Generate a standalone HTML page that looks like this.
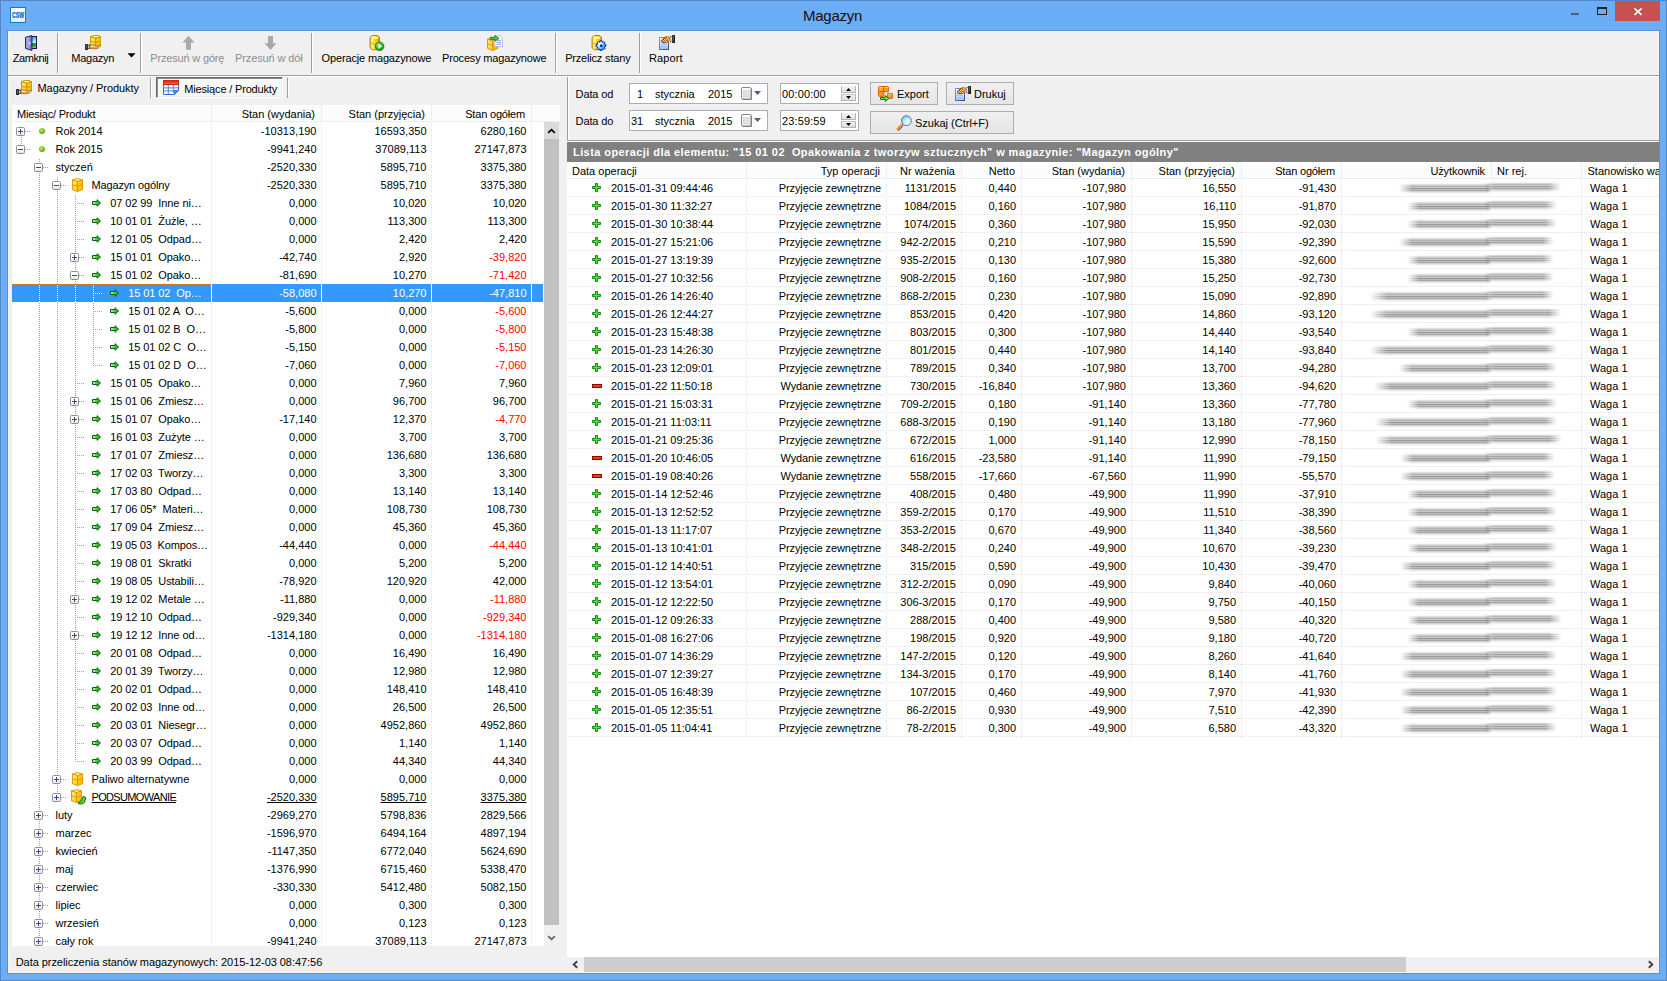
<!DOCTYPE html>
<html lang="pl"><head><meta charset="utf-8"><title>Magazyn</title>
<style>
html,body{margin:0;padding:0;}
body{width:1667px;height:981px;overflow:hidden;background:#6BADF6;position:relative;font-family:"Liberation Sans",sans-serif;font-size:11px;color:#000;}
div,svg{position:absolute;box-sizing:border-box;}
.t{white-space:pre;line-height:13px;height:13px;}
.c{text-align:center;}
.r{text-align:right;}
.g{color:#8d8d8d;}
.row{left:0;width:100%;height:18px;line-height:18px;white-space:pre;}
.row div{height:18px;line-height:18px;white-space:pre;top:0;}
.num{text-align:right;}
.red{color:#f00;}
.u{text-decoration:underline;}
.sep{width:2px;border-left:1px solid #a0a0a0;border-right:1px solid #fff;}
.btn{border:1px solid #acacac;background:linear-gradient(#f0f0f0,#e5e5e5);}
.edit{border:1px solid #abadb3;background:#fff;}
.hl{color:#fff;}
.bx{width:9px;height:9px;border:1px solid #8e8e8e;border-radius:1.5px;background:linear-gradient(#fff,#fff 45%,#e3e3e3);}
.bx i{position:absolute;background:#2f4a94;}
.fl{background:linear-gradient(90deg,transparent,#efefef 8%,#efefef 92%,transparent);}.s1{background:linear-gradient(rgba(85,85,85,0.05) 0.0%,rgba(85,85,85,0.05) 9.1%,rgba(85,85,85,0.18) 9.1%,rgba(85,85,85,0.18) 18.2%,rgba(85,85,85,0.32) 18.2%,rgba(85,85,85,0.32) 27.3%,rgba(85,85,85,0.46) 27.3%,rgba(85,85,85,0.46) 36.4%,rgba(85,85,85,0.32) 36.4%,rgba(85,85,85,0.32) 45.5%,rgba(85,85,85,0.6) 45.5%,rgba(85,85,85,0.6) 54.5%,rgba(85,85,85,0.4) 54.5%,rgba(85,85,85,0.4) 63.6%,rgba(85,85,85,0.5) 63.6%,rgba(85,85,85,0.5) 72.7%,rgba(85,85,85,0.28) 72.7%,rgba(85,85,85,0.28) 81.8%,rgba(85,85,85,0.12) 81.8%,rgba(85,85,85,0.12) 90.9%,rgba(85,85,85,0.04) 90.9%,rgba(85,85,85,0.04) 100.0%);-webkit-mask-image:linear-gradient(90deg,transparent,#000 14%,#000 95%,transparent);mask-image:linear-gradient(90deg,transparent,#000 14%,#000 95%,transparent);filter:blur(0.55px);}.s2{background:linear-gradient(rgba(85,85,85,0.06) 0.0%,rgba(85,85,85,0.06) 9.1%,rgba(85,85,85,0.24) 9.1%,rgba(85,85,85,0.24) 18.2%,rgba(85,85,85,0.42) 18.2%,rgba(85,85,85,0.42) 27.3%,rgba(85,85,85,0.3) 27.3%,rgba(85,85,85,0.3) 36.4%,rgba(85,85,85,0.54) 36.4%,rgba(85,85,85,0.54) 45.5%,rgba(85,85,85,0.36) 45.5%,rgba(85,85,85,0.36) 54.5%,rgba(85,85,85,0.52) 54.5%,rgba(85,85,85,0.52) 63.6%,rgba(85,85,85,0.32) 63.6%,rgba(85,85,85,0.32) 72.7%,rgba(85,85,85,0.18) 72.7%,rgba(85,85,85,0.18) 81.8%,rgba(85,85,85,0.08) 81.8%,rgba(85,85,85,0.08) 90.9%,rgba(85,85,85,0.03) 90.9%,rgba(85,85,85,0.03) 100.0%);-webkit-mask-image:linear-gradient(90deg,transparent,#000 12%,#000 84%,transparent);mask-image:linear-gradient(90deg,transparent,#000 12%,#000 84%,transparent);filter:blur(0.55px);}
</style></head><body>

<svg width="0" height="0" style="position:absolute"><defs>
<linearGradient id="gy" x1="0" y1="0" x2="0" y2="1"><stop offset="0" stop-color="#ffe96a"/><stop offset="1" stop-color="#f0a800"/></linearGradient>
<linearGradient id="gyl" x1="0" y1="0" x2="1" y2="1"><stop offset="0" stop-color="#fff27a"/><stop offset="1" stop-color="#ffcc00"/></linearGradient>
<linearGradient id="gyr" x1="0" y1="0" x2="1" y2="1"><stop offset="0" stop-color="#ffd21a"/><stop offset="1" stop-color="#ffb400"/></linearGradient>
<linearGradient id="gcyl" x1="0" y1="0" x2="1" y2="0"><stop offset="0" stop-color="#ffe23a"/><stop offset="0.25" stop-color="#fff27a"/><stop offset="0.6" stop-color="#ffd000"/><stop offset="1" stop-color="#e09c00"/></linearGradient>
<linearGradient id="gappbg" x1="0" y1="0" x2="0" y2="1"><stop offset="0" stop-color="#fff"/><stop offset="0.6" stop-color="#fbfbfb"/><stop offset="1" stop-color="#e6e6e6"/></linearGradient>
<linearGradient id="gdoor" x1="0" y1="0" x2="1" y2="0"><stop offset="0" stop-color="#9c98e4"/><stop offset="0.45" stop-color="#a8a4ee"/><stop offset="1" stop-color="#5c5aa0"/></linearGradient>
<linearGradient id="gsky" x1="0" y1="0" x2="0" y2="1"><stop offset="0" stop-color="#2ca4ff"/><stop offset="0.5" stop-color="#d4f6ff"/><stop offset="0.56" stop-color="#1a9a12"/><stop offset="0.75" stop-color="#22a818"/><stop offset="1" stop-color="#72fa40"/></linearGradient>
<linearGradient id="ghand" x1="0" y1="0" x2="0" y2="1"><stop offset="0" stop-color="#fffce4"/><stop offset="0.45" stop-color="#ffd87c"/><stop offset="1" stop-color="#d2600e"/></linearGradient>
<linearGradient id="gdoc" x1="0" y1="0" x2="0" y2="1"><stop offset="0" stop-color="#ffffff"/><stop offset="1" stop-color="#9fc2f6"/></linearGradient>
<linearGradient id="gdocs" x1="0" y1="0" x2="1" y2="1"><stop offset="0" stop-color="#6e9eec"/><stop offset="1" stop-color="#3c4690"/></linearGradient>
<linearGradient id="gred" x1="0" y1="0" x2="0" y2="1"><stop offset="0" stop-color="#d81c08"/><stop offset="1" stop-color="#ff6a3a"/></linearGradient>
<linearGradient id="gor" x1="0" y1="0" x2="1" y2="1"><stop offset="0" stop-color="#ffb45a"/><stop offset="1" stop-color="#f07c10"/></linearGradient>
<linearGradient id="garr2" x1="0" y1="0" x2="1" y2="0"><stop offset="0.1" stop-color="#aaf8a4"/><stop offset="0.6" stop-color="#3cc43a"/><stop offset="1" stop-color="#1c9a1c"/></linearGradient>
<linearGradient id="ggarr" x1="0" y1="0" x2="0" y2="1"><stop offset="0" stop-color="#7df06a"/><stop offset="1" stop-color="#1fae1a"/></linearGradient>
<radialGradient id="ggreen" cx="0.42" cy="0.35" r="0.7"><stop offset="0" stop-color="#c4ec6a"/><stop offset="0.55" stop-color="#86c623"/><stop offset="1" stop-color="#4f9a0c"/></radialGradient>
<radialGradient id="gplay" cx="0.4" cy="0.35" r="0.75"><stop offset="0" stop-color="#8cf070"/><stop offset="0.6" stop-color="#2fb822"/><stop offset="1" stop-color="#0f7a0c"/></radialGradient>
<radialGradient id="ggear" cx="0.3" cy="0.3" r="0.9"><stop offset="0" stop-color="#ffffff"/><stop offset="0.35" stop-color="#b8ecff"/><stop offset="0.75" stop-color="#38a4ff"/><stop offset="1" stop-color="#1c7cf0"/></radialGradient>
<radialGradient id="gglass" cx="0.66" cy="0.68" r="0.8"><stop offset="0" stop-color="#ffffff"/><stop offset="0.45" stop-color="#c6f2ff"/><stop offset="1" stop-color="#72b2f0"/></radialGradient>
<g id="ic-app"><rect x="0.5" y="0.5" width="15" height="15" fill="url(#gappbg)" stroke="#0a7ccc"/></g>
<g id="ic-dot"><circle cx="3" cy="3" r="3" fill="url(#ggreen)"/></g>
<g id="ic-box" stroke="#dd9200" stroke-width="0.9" stroke-linejoin="round"><path d="M0.5 1.9 L5.500 3.4 V13.500 L0.5 11.700 Z" fill="url(#gyl)"/><path d="M10.500 1.9 L5.500 3.4 V13.500 L10.500 11.700 Z" fill="url(#gyr)"/><path d="M5.500 0.5 L10.500 1.9 L5.500 3.4 L0.5 1.9 Z" fill="#fff38c"/><path d="M0.5 6.700 L5.500 8.300 L10.500 6.700" fill="none"/></g>
<g id="ic-box2"><use href="#ic-box"/><path d="M12.200 7.400 L14.400 8.200 L14.700 10.400 L13.600 11 L14 12.800 L11.800 14.800 L7.600 14.900 L7.300 13.600 L9.800 12.400 L10.400 10.200 Z" fill="#52d636" stroke="#0e6e0c" stroke-width="1" stroke-linejoin="round"/></g>
<g id="ic-arr"><path d="M0.500 2.500 H5.100 V0.700 L8.500 4 L5.100 7.300 V5.500 H0.500 Z" fill="url(#garr2)" stroke="#0a5c0c" stroke-width="1" stroke-linejoin="round"/></g>
<g id="ic-plus"><path d="M3.500 0.5 H5.500 V3.500 H8.500 V5.500 H5.500 V8.500 H3.500 V5.500 H0.5 V3.500 H3.500 Z" fill="#5fdc48" stroke="#138a10" stroke-width="1"/></g>
<g id="ic-minus"><rect x="0.5" y="0.5" width="9" height="3" fill="#f23a14" stroke="#8a0a04"/></g>
<g id="ic-up"><path d="M8.500 0.8 L14.500 7.600 H11 V14.800 H6 V7.600 H2.500 Z" fill="#a9a9a9"/></g>
<g id="ic-down"><path d="M8.500 15 L14.500 8.200 H11 V1 H6 V8.200 H2.500 Z" fill="#a9a9a9"/></g>
<g id="ic-door"><rect x="8.500" y="1.500" width="5" height="12" fill="url(#gsky)" stroke="#1a1652"/><path d="M2.500 2.300 L9 0.6 V15.400 L2.500 13.400 Z" fill="url(#gdoor)" stroke="#24246a" stroke-linejoin="round"/><rect x="6" y="7" width="1.200" height="2.200" fill="#eef"/></g>
<g id="ic-stack" stroke="#cc8c00" stroke-width="0.9" stroke-linejoin="round"><path d="M5.500 1.800 L10.700 3.200 V12.400 L5.500 11 Z" fill="url(#gyl)"/><path d="M15.700 1.800 L10.700 3.200 V12.400 L15.700 11 Z" fill="url(#gyr)"/><path d="M8.200 0.450 H13 L15.700 1.800 L10.700 3.200 L5.500 1.800 Z" fill="#fff680"/><path d="M5.500 6.300 L10.700 7.300 L15.700 6.300" fill="none"/></g>
<g id="ic-hand"><use href="#ic-stack"/><path d="M4.800 10.300 C6.500 9.400 8 9.600 9.600 10.400 C11 11.200 12.600 11.300 14 10.500 L15.900 9.900 C16.100 10.900 15 12 13.400 12.900 C11.600 14 9.500 13.900 4.800 13.600 Z" fill="url(#ghand)" stroke="#a8601c" stroke-width="0.600"/><path d="M5 10.300 C6.500 9.500 8 9.700 9.600 10.500 C11 11.300 12.600 11.400 14 10.600 L15.800 10" fill="none" stroke="#8c6c9c" stroke-width="0.700"/><rect x="0.100" y="9.100" width="2.800" height="5.900" rx="0.400" fill="#141414"/><rect x="1.100" y="9.900" width="0.600" height="4" fill="#8a8a8a"/><rect x="2.900" y="10" width="1.900" height="3.600" fill="#fafafa" stroke="#1e1e1e" stroke-width="0.700"/></g>
<g id="ic-cyl"><path d="M3.200 0.500 H8.400 L10.500 2.400 V12.800 L8.400 14.700 H3.200 L1.100 12.800 V2.400 Z" fill="url(#gcyl)" stroke="#b87c00" stroke-width="1" stroke-linejoin="round"/><ellipse cx="5.800" cy="2.700" rx="3.600" ry="1.300" fill="#ffff9c" opacity="0.9"/><path d="M1.600 7.400 C2.500 9 4.500 9.200 6 9" fill="none" stroke="#c89200" stroke-width="0.9"/></g>
<g id="ic-cylplay"><use href="#ic-cyl"/><circle cx="10.600" cy="11.300" r="4.300" fill="url(#gplay)" stroke="#137a10" stroke-width="0.8"/><path d="M9.300 8.900 L13.100 11.300 L9.300 13.700 Z" fill="#fff"/></g>
<g id="ic-cylgear"><use href="#ic-cyl"/><path d="M8.83 7.19 L9.01 5.80 L10.99 5.80 L11.17 7.19 L11.58 7.37 L12.69 6.50 L14.10 7.91 L13.23 9.02 L13.41 9.43 L14.80 9.61 L14.80 11.59 L13.41 11.77 L13.23 12.18 L14.10 13.29 L12.69 14.70 L11.58 13.83 L11.17 14.01 L10.99 15.40 L9.01 15.40 L8.83 14.01 L8.42 13.83 L7.31 14.70 L5.90 13.29 L6.77 12.18 L6.59 11.77 L5.20 11.59 L5.20 9.61 L6.59 9.43 L6.77 9.02 L5.90 7.91 L7.31 6.50 L8.42 7.37 Z" fill="url(#ggear)" stroke="#0a27a4" stroke-width="1" stroke-linejoin="round"/><circle cx="10.300" cy="10.800" r="1.500" fill="#0b3cb6"/></g>
<g id="ic-proc"><g stroke="#dd9200" stroke-width="0.9" stroke-linejoin="round"><path d="M0.5 4.200 L5.700 5.800 V15.400 L0.5 13.400 Z" fill="url(#gyl)"/><path d="M10.700 4.200 L5.700 5.800 V15.400 L10.700 13.400 Z" fill="url(#gyr)"/><path d="M5.700 2.700 L10.700 4.200 L5.700 5.800 L0.5 4.200 Z" fill="#fff38c"/><path d="M0.5 8.700 L5.700 10.400 L10.700 8.700" fill="none"/></g><path d="M7.700 0.800 H13.300 L15.600 3 V11.600 H7.700 Z" fill="#fbfdff" stroke="#a8b0e0" stroke-width="0.8"/><path d="M9.300 5.600 H14.200 M9.300 7.500 H14.200 M9.300 9.400 H14.200" stroke="#8a9ae0" stroke-width="0.9"/><path d="M3.300 2.300 H8 V0.500 L12 3.300 L8 6.100 V4.400 H3.300 Z" fill="url(#ggarr)" stroke="#0e6a10" stroke-width="0.8" stroke-linejoin="round"/></g>
<g id="ic-report"><rect x="0.500" y="2.500" width="9" height="12" fill="url(#gdoc)" stroke="url(#gdocs)"/><path d="M2.200 9.400 H7.800 M2.200 11.700 H7.800" stroke="#9cc6f6" stroke-width="1.300"/><path d="M2 5.400 L5.200 2.300 L8.200 0.900 L11 2.200 L11.200 5.600 L8.200 7.500 L5.600 8.300 L2.400 7.700 Z" fill="#9a5418"/><path d="M8 1 L11 2.200 L11.200 5.600 L9 6.700 L7.600 3.500 Z" fill="#f0952e"/><path d="M3 6 h1 v1 h-1 z M4 5 h1 v1 h-1 z M5 4 h1 v1 h-1 z M6 3 h1 v1 h-1 z M5 6 h1 v1 h-1 z M6 5 h1 v1 h-1 z M7 4 h1 v1 h-1 z M7 6 h1 v1 h-1 z M8 2.200 h1 v1 h-1 z" fill="#ffe48a"/><rect x="11.200" y="1.300" width="2" height="5.600" fill="#f2f2f2" stroke="#6e6e6e" stroke-width="0.7"/><rect x="13.200" y="0" width="2.800" height="8" rx="0.500" fill="#1e1e1e"/><rect x="14" y="0.800" width="0.700" height="5" fill="#6a6a6a"/></g>
<g id="ic-cal"><path d="M0.500 0.500 H15.500 V10.500 L11.500 14.500 H0.500 Z" fill="#fff" stroke="#2f6cd6"/><rect x="0.500" y="0.500" width="15" height="4" fill="url(#gred)" stroke="#c42a10"/><path d="M1 7.900 H15 M1 10.900 H13 M5.300 5 V14 M10.300 5 V13" stroke="#3a78dc" stroke-width="0.9"/><path d="M15.500 10.500 H11.500 V14.500 Z" fill="#4a8af0" stroke="#2f6cd6" stroke-width="0.8"/></g>
<g id="ic-dcal"><rect x="1.300" y="1.300" width="9.700" height="11.700" rx="1.300" fill="#8c8480"/><rect x="0.500" y="0.500" width="9.500" height="11.500" rx="1.200" fill="#fdfdfd" stroke="#7e7270" stroke-width="0.9"/><rect x="2" y="3.300" width="6.600" height="7" fill="#c4ccde"/><path d="M2 5.600 H8.600 M2 7.900 H8.600 M4.200 3.300 V10.300 M6.400 3.300 V10.300" stroke="#f4f6fb" stroke-width="0.7"/></g>
<g id="ic-export"><path d="M1.200 0.500 H9.800 L10.500 1.200 V5.800 H5.800 V10.400 H1.200 L0.500 9.700 V1.200 Z" fill="url(#gor)" stroke="#d46a08" stroke-width="1" stroke-linejoin="round"/><path d="M5.600 1 V5.600 M1 5.600 H5.600" stroke="#b85400" stroke-width="0.9"/><path d="M1.500 1.500 H5 M6.200 1.500 H9.800" stroke="#ffd9a0" stroke-width="0.8"/><rect x="9.600" y="7.400" width="5" height="5" rx="0.600" fill="url(#gor)" stroke="#d46a08"/><path d="M10.400 8.300 H13.800" stroke="#ffd9a0" stroke-width="0.7"/><path d="M2.500 11.500 H7.300 V9.500 L10.800 12.500 L7.300 15.500 V13.500 H2.500 Z" fill="#74e044" stroke="#0e7c10" stroke-width="1" stroke-linejoin="round"/></g>
<g id="ic-search"><path d="M1.700 15.300 L6.700 10" stroke="#5a5a9c" stroke-width="2.400" stroke-linecap="butt"/><path d="M1.200 14.600 L6.200 9.300" stroke="#f8921e" stroke-width="2.400" stroke-linecap="butt"/><circle cx="10.400" cy="5.700" r="4.900" fill="url(#gglass)" stroke="#5870b6" stroke-width="1"/></g>
</defs></svg>
<div style="left:0px;top:0px;width:1667px;height:981px;border:1px solid #5585c4;"></div>
<div class="t c" style="left:682.6px;top:6.6px;width:300px;font-size:15px;line-height:18px;height:18px;letter-spacing:-0.25px;color:#111;">Magazyn</div>
<svg class="i" style="left:10px;top:7px" width="16" height="16" viewBox="0 0 16 16"><use href="#ic-app"/><text x="2" y="11.1" font-family="Liberation Sans, sans-serif" font-weight="bold" font-size="8.6" fill="#0870c0" stroke="#0870c0" stroke-width="0.35" textLength="12" lengthAdjust="spacingAndGlyphs">CSW</text></svg>
<div style="left:1615px;top:1px;width:45px;height:20px;background:#c75050;"></div>
<svg class="i" style="left:1633px;top:7px" width="10" height="9" viewBox="0 0 10 9"><path d="M1.4 1.3 L8.6 7.9 M8.6 1.3 L1.4 7.9" stroke="#fff" stroke-width="1.7" fill="none"/></svg>
<div style="left:1597px;top:7px;width:10px;height:8px;border:1px solid #1e1e1e;border-top-width:2px;"></div>
<div style="left:1571px;top:13px;width:8px;height:2px;background:#44608c;"></div>
<div style="left:7px;top:30px;width:1653px;height:944px;background:#5790d6;"></div>
<div style="left:8px;top:31px;width:1651px;height:942px;background:#f0f0f0;border:1px solid #f7f5f2;"></div>
<div style="left:8px;top:75px;width:1651px;height:1px;background:#a0a0a0;"></div>
<div style="left:8px;top:76px;width:1651px;height:1px;background:#fff;"></div>
<div class="sep" style="left:57px;top:33px;width:2px;height:40px;"></div>
<div class="sep" style="left:140px;top:33px;width:2px;height:40px;"></div>
<div class="sep" style="left:311px;top:33px;width:2px;height:40px;"></div>
<div class="sep" style="left:555px;top:33px;width:2px;height:40px;"></div>
<div class="sep" style="left:639px;top:33px;width:2px;height:40px;"></div>
<svg class="i" style="left:23px;top:35px" width="16" height="16" viewBox="0 0 16 16"><use href="#ic-door"/></svg>
<div class="t c" style="left:-119.5px;top:52px;width:300px;letter-spacing:-0.4px;">Zamknij</div>
<svg class="i" style="left:85px;top:35px" width="16" height="16" viewBox="0 0 16 16"><use href="#ic-hand"/></svg>
<div class="t c" style="left:-57.3px;top:52px;width:300px;letter-spacing:-0.28px;">Magazyn</div>
<svg class="i" style="left:127px;top:53px" width="9" height="5" viewBox="0 0 9 5"><path d="M0.5 0.3 H8.5 L4.5 4.6 Z" fill="#000"/></svg>
<svg class="i" style="left:179.5px;top:35px" width="16" height="16" viewBox="0 0 16 16"><use href="#ic-up"/></svg>
<div class="t g c" style="left:37.30000000000001px;top:52px;width:300px;letter-spacing:-0.17px;">Przesuń w górę</div>
<svg class="i" style="left:261.5px;top:35px" width="16" height="16" viewBox="0 0 16 16"><use href="#ic-down"/></svg>
<div class="t g c" style="left:118.80000000000001px;top:52px;width:300px;letter-spacing:-0.12px;">Przesuń w dół</div>
<svg class="i" style="left:369px;top:35px" width="16" height="16" viewBox="0 0 16 16"><use href="#ic-cylplay"/></svg>
<div class="t c" style="left:226.39999999999998px;top:52px;width:300px;letter-spacing:-0.15px;">Operacje magazynowe</div>
<svg class="i" style="left:487px;top:35px" width="16" height="16" viewBox="0 0 16 16"><use href="#ic-proc"/></svg>
<div class="t c" style="left:344.2px;top:52px;width:300px;letter-spacing:-0.18px;">Procesy magazynowe</div>
<svg class="i" style="left:591px;top:35px" width="16" height="16" viewBox="0 0 16 16"><use href="#ic-cylgear"/></svg>
<div class="t c" style="left:447.79999999999995px;top:52px;width:300px;letter-spacing:-0.18px;">Przelicz stany</div>
<svg class="i" style="left:659px;top:35px" width="16" height="16" viewBox="0 0 16 16"><use href="#ic-report"/></svg>
<div class="t c" style="left:515.9px;top:52px;width:300px;letter-spacing:0.1px;">Raport</div>
<svg class="i" style="left:16px;top:80px" width="16" height="16" viewBox="0 0 16 16"><use href="#ic-hand"/></svg>
<div class="t" style="left:37.5px;top:82px;letter-spacing:-0.07px;">Magazyny / Produkty</div>
<div class="sep" style="left:150px;top:78px;width:2px;height:20px;"></div>
<div style="left:156px;top:77px;width:127px;height:21px;border:1px solid;border-color:#696969 #fff #fff #696969;background:#f8f8f8;box-shadow:inset 1px 1px 0 #8c8c8c, inset -1px -1px 0 #ececec;"></div>
<svg class="i" style="left:163px;top:80px" width="16" height="16" viewBox="0 0 16 16"><use href="#ic-cal"/></svg>
<div class="t" style="left:184.3px;top:83px;letter-spacing:-0.17px;">Miesiące / Produkty</div>
<div class="sep" style="left:287px;top:78px;width:2px;height:20px;"></div>
<div style="left:567px;top:77px;width:1px;height:63px;background:#a0a0a0;"></div>
<div style="left:568px;top:77px;width:1px;height:63px;background:#fff;"></div>
<div style="left:567px;top:140px;width:1092px;height:1px;background:#a0a0a0;"></div>
<div style="left:567px;top:141px;width:1092px;height:1px;background:#fff;"></div>
<div class="t" style="left:575.6px;top:88px;letter-spacing:-0.14px;">Data od</div>
<div class="t" style="left:575.6px;top:115px;letter-spacing:-0.14px;">Data do</div>
<div class="edit" style="left:629px;top:83px;width:139px;height:21px;"></div>
<div class="t" style="left:637px;top:88px;">1</div>
<div class="t" style="left:655px;top:88px;">stycznia</div>
<div class="t" style="left:708px;top:88px;">2015</div>
<svg class="i" style="left:741px;top:87px" width="12" height="14" viewBox="0 0 12 14"><use href="#ic-dcal"/></svg>
<svg class="i" style="left:754px;top:91px" width="7" height="4" viewBox="0 0 7 4"><path d="M0 0 H7 L3.5 4 Z" fill="#4d6185"/></svg>
<div class="edit" style="left:629px;top:110px;width:139px;height:21px;"></div>
<div class="t" style="left:631px;top:115px;">31</div>
<div class="t" style="left:655px;top:115px;">stycznia</div>
<div class="t" style="left:708px;top:115px;">2015</div>
<svg class="i" style="left:741px;top:114px" width="12" height="14" viewBox="0 0 12 14"><use href="#ic-dcal"/></svg>
<svg class="i" style="left:754px;top:118px" width="7" height="4" viewBox="0 0 7 4"><path d="M0 0 H7 L3.5 4 Z" fill="#4d6185"/></svg>
<div class="edit" style="left:780px;top:83px;width:79px;height:21px;"></div>
<div class="t" style="left:782px;top:88px;letter-spacing:0.12px;">00:00:00</div>
<div style="left:841px;top:86px;width:15px;height:7px;border:1px solid #b4b4b4;border-top:0;background:linear-gradient(#f4f4f4,#e2e2e2);"></div>
<div style="left:841px;top:94px;width:15px;height:7px;border:1px solid #b4b4b4;border-top-color:#c8c8c8;background:linear-gradient(#f0f0f0,#dedede);"></div>
<svg class="i" style="left:846px;top:88px" width="5" height="3" viewBox="0 0 5 3"><path d="M0 3 H5 L2.5 0 Z" fill="#000"/></svg>
<svg class="i" style="left:846px;top:96px" width="5" height="3" viewBox="0 0 5 3"><path d="M0 0 H5 L2.5 3 Z" fill="#000"/></svg>
<div class="edit" style="left:780px;top:110px;width:79px;height:21px;"></div>
<div class="t" style="left:782px;top:115px;letter-spacing:0.12px;">23:59:59</div>
<div style="left:841px;top:113px;width:15px;height:7px;border:1px solid #b4b4b4;border-top:0;background:linear-gradient(#f4f4f4,#e2e2e2);"></div>
<div style="left:841px;top:121px;width:15px;height:7px;border:1px solid #b4b4b4;border-top-color:#c8c8c8;background:linear-gradient(#f0f0f0,#dedede);"></div>
<svg class="i" style="left:846px;top:115px" width="5" height="3" viewBox="0 0 5 3"><path d="M0 3 H5 L2.5 0 Z" fill="#000"/></svg>
<svg class="i" style="left:846px;top:123px" width="5" height="3" viewBox="0 0 5 3"><path d="M0 0 H5 L2.5 3 Z" fill="#000"/></svg>
<div class="btn" style="left:870px;top:82px;width:68px;height:23px;"></div>
<svg class="i" style="left:878px;top:86px" width="16" height="16" viewBox="0 0 16 16"><use href="#ic-export"/></svg>
<div class="t" style="left:897px;top:88px;">Export</div>
<div class="btn" style="left:946px;top:82px;width:68px;height:23px;"></div>
<svg class="i" style="left:955px;top:86px" width="16" height="16" viewBox="0 0 16 16"><use href="#ic-report"/></svg>
<div class="t" style="left:974px;top:88px;">Drukuj</div>
<div class="btn" style="left:870px;top:111px;width:144px;height:23px;"></div>
<svg class="i" style="left:896px;top:115px" width="16" height="16" viewBox="0 0 16 16"><use href="#ic-search"/></svg>
<div class="t" style="left:915px;top:117px;">Szukaj (Ctrl+F)</div>
<div style="left:567px;top:142px;width:1092px;height:20px;background:#808080;"></div>
<div class="t" style="left:573px;top:146px;color:#fff;font-weight:bold;letter-spacing:0.42px;">Lista operacji dla elementu: &quot;15 01 02  Opakowania z tworzyw sztucznych&quot; w magazynie: &quot;Magazyn ogólny&quot;</div>
<div style="left:12px;top:105px;width:548px;height:17px;background:linear-gradient(#fff 1px,#fcfcfc 1px);border-bottom:1px solid #e6eefa;"></div>
<div style="left:211px;top:105px;width:1px;height:16px;background:#e6eefa;"></div>
<div style="left:321px;top:105px;width:1px;height:16px;background:#e6eefa;"></div>
<div style="left:431px;top:105px;width:1px;height:16px;background:#e6eefa;"></div>
<div style="left:531px;top:105px;width:1px;height:16px;background:#e6eefa;"></div>
<div class="t" style="left:17px;top:108px;letter-spacing:-0.19px;">Miesiąc/ Produkt</div>
<div class="t r" style="left:15px;top:108px;width:300px;">Stan (wydania)</div>
<div class="t r" style="left:125px;top:108px;width:300px;">Stan (przyjęcia)</div>
<div class="t r" style="left:225px;top:108px;width:300px;letter-spacing:-0.18px;">Stan ogółem</div>
<div style="left:12px;top:122px;width:532px;height:824px;background:#fff;overflow:hidden;"></div>
<div style="left:211px;top:122px;width:1px;height:824px;background-image:linear-gradient(#e2e2e2 50%,transparent 50%);background-size:1px 2px;background-position:0 1px;"></div>
<div style="left:321px;top:122px;width:1px;height:824px;background-image:linear-gradient(#e2e2e2 50%,transparent 50%);background-size:1px 2px;background-position:0 1px;"></div>
<div style="left:431px;top:122px;width:1px;height:824px;background-image:linear-gradient(#e2e2e2 50%,transparent 50%);background-size:1px 2px;background-position:0 1px;"></div>
<div style="left:531px;top:122px;width:1px;height:824px;background-image:linear-gradient(#e2e2e2 50%,transparent 50%);background-size:1px 2px;background-position:0 1px;"></div>
<div style="left:21px;top:136px;width:1px;height:4px;background-image:linear-gradient(#a0a0a0 50%,transparent 50%);background-size:1px 2px;background-position:0 1px;"></div>
<div style="left:25px;top:131px;width:5px;height:1px;background-image:linear-gradient(90deg,#a0a0a0 50%,transparent 50%);background-size:2px 1px;background-position:0px 0;"></div>
<div class="bx" style="left:16px;top:127px;width:9px;height:9px;"><i style="left:1px;top:3px;width:5px;height:1px"></i><i style="left:3px;top:1px;width:1px;height:5px"></i></div>
<svg class="i" style="left:39px;top:128px" width="6" height="6" viewBox="0 0 6 6"><use href="#ic-dot"/></svg>
<div class="t" style="left:55.5px;top:122px;height:18px;line-height:18px;">Rok 2014</div>
<div class="t r" style="left:216.5px;width:100px;top:122px;height:18px;line-height:18px;">-10313,190</div>
<div class="t r" style="left:326.5px;width:100px;top:122px;height:18px;line-height:18px;">16593,350</div>
<div class="t r" style="left:426.5px;width:100px;top:122px;height:18px;line-height:18px;">6280,160</div>
<div style="left:21px;top:140px;width:1px;height:5px;background-image:linear-gradient(#a0a0a0 50%,transparent 50%);background-size:1px 2px;background-position:0 1px;"></div>
<div style="left:25px;top:149px;width:5px;height:1px;background-image:linear-gradient(90deg,#a0a0a0 50%,transparent 50%);background-size:2px 1px;background-position:0px 0;"></div>
<div class="bx" style="left:16px;top:145px;width:9px;height:9px;"><i style="left:1px;top:3px;width:5px;height:1px"></i></div>
<svg class="i" style="left:39px;top:146px" width="6" height="6" viewBox="0 0 6 6"><use href="#ic-dot"/></svg>
<div class="t" style="left:55.5px;top:140px;height:18px;line-height:18px;">Rok 2015</div>
<div class="t r" style="left:216.5px;width:100px;top:140px;height:18px;line-height:18px;">-9941,240</div>
<div class="t r" style="left:326.5px;width:100px;top:140px;height:18px;line-height:18px;">37089,113</div>
<div class="t r" style="left:426.5px;width:100px;top:140px;height:18px;line-height:18px;">27147,873</div>
<div style="left:39px;top:158px;width:1px;height:5px;background-image:linear-gradient(#a0a0a0 50%,transparent 50%);background-size:1px 2px;background-position:0 1px;"></div>
<div style="left:39px;top:172px;width:1px;height:4px;background-image:linear-gradient(#a0a0a0 50%,transparent 50%);background-size:1px 2px;background-position:0 1px;"></div>
<div style="left:43px;top:167px;width:5px;height:1px;background-image:linear-gradient(90deg,#a0a0a0 50%,transparent 50%);background-size:2px 1px;background-position:0px 0;"></div>
<div class="bx" style="left:34px;top:163px;width:9px;height:9px;"><i style="left:1px;top:3px;width:5px;height:1px"></i></div>
<div class="t" style="left:55.5px;top:158px;height:18px;line-height:18px;">styczeń</div>
<div class="t r" style="left:216.5px;width:100px;top:158px;height:18px;line-height:18px;">-2520,330</div>
<div class="t r" style="left:326.5px;width:100px;top:158px;height:18px;line-height:18px;">5895,710</div>
<div class="t r" style="left:426.5px;width:100px;top:158px;height:18px;line-height:18px;">3375,380</div>
<div style="left:57px;top:176px;width:1px;height:5px;background-image:linear-gradient(#a0a0a0 50%,transparent 50%);background-size:1px 2px;background-position:0 1px;"></div>
<div style="left:57px;top:190px;width:1px;height:4px;background-image:linear-gradient(#a0a0a0 50%,transparent 50%);background-size:1px 2px;background-position:0 1px;"></div>
<div style="left:61px;top:185px;width:5px;height:1px;background-image:linear-gradient(90deg,#a0a0a0 50%,transparent 50%);background-size:2px 1px;background-position:0px 0;"></div>
<div style="left:39px;top:176px;width:1px;height:18px;background-image:linear-gradient(#a0a0a0 50%,transparent 50%);background-size:1px 2px;background-position:0 1px;"></div>
<div class="bx" style="left:52px;top:181px;width:9px;height:9px;"><i style="left:1px;top:3px;width:5px;height:1px"></i></div>
<svg class="i" style="left:72px;top:178px" width="11" height="14" viewBox="0 0 11 14"><use href="#ic-box"/></svg>
<div class="t" style="left:91.5px;top:176px;height:18px;line-height:18px;letter-spacing:-0.15px;">Magazyn ogólny</div>
<div class="t r" style="left:216.5px;width:100px;top:176px;height:18px;line-height:18px;">-2520,330</div>
<div class="t r" style="left:326.5px;width:100px;top:176px;height:18px;line-height:18px;">5895,710</div>
<div class="t r" style="left:426.5px;width:100px;top:176px;height:18px;line-height:18px;">3375,380</div>
<div style="left:75px;top:194px;width:1px;height:18px;background-image:linear-gradient(#a0a0a0 50%,transparent 50%);background-size:1px 2px;background-position:0 1px;"></div>
<div style="left:75px;top:203px;width:9px;height:1px;background-image:linear-gradient(90deg,#a0a0a0 50%,transparent 50%);background-size:2px 1px;background-position:0px 0;"></div>
<div style="left:39px;top:194px;width:1px;height:18px;background-image:linear-gradient(#a0a0a0 50%,transparent 50%);background-size:1px 2px;background-position:0 1px;"></div>
<div style="left:57px;top:194px;width:1px;height:18px;background-image:linear-gradient(#a0a0a0 50%,transparent 50%);background-size:1px 2px;background-position:0 1px;"></div>
<svg class="i" style="left:92px;top:199px" width="9" height="8" viewBox="0 0 9 8"><use href="#ic-arr"/></svg>
<div class="t" style="left:110.2px;top:194px;height:18px;line-height:18px;letter-spacing:-0.08px;">07 02 99  Inne ni…</div>
<div class="t r" style="left:216.5px;width:100px;top:194px;height:18px;line-height:18px;">0,000</div>
<div class="t r" style="left:326.5px;width:100px;top:194px;height:18px;line-height:18px;">10,020</div>
<div class="t r" style="left:426.5px;width:100px;top:194px;height:18px;line-height:18px;">10,020</div>
<div style="left:75px;top:212px;width:1px;height:18px;background-image:linear-gradient(#a0a0a0 50%,transparent 50%);background-size:1px 2px;background-position:0 1px;"></div>
<div style="left:75px;top:221px;width:9px;height:1px;background-image:linear-gradient(90deg,#a0a0a0 50%,transparent 50%);background-size:2px 1px;background-position:0px 0;"></div>
<div style="left:39px;top:212px;width:1px;height:18px;background-image:linear-gradient(#a0a0a0 50%,transparent 50%);background-size:1px 2px;background-position:0 1px;"></div>
<div style="left:57px;top:212px;width:1px;height:18px;background-image:linear-gradient(#a0a0a0 50%,transparent 50%);background-size:1px 2px;background-position:0 1px;"></div>
<svg class="i" style="left:92px;top:217px" width="9" height="8" viewBox="0 0 9 8"><use href="#ic-arr"/></svg>
<div class="t" style="left:110.2px;top:212px;height:18px;line-height:18px;letter-spacing:-0.08px;">10 01 01  Żużle, …</div>
<div class="t r" style="left:216.5px;width:100px;top:212px;height:18px;line-height:18px;">0,000</div>
<div class="t r" style="left:326.5px;width:100px;top:212px;height:18px;line-height:18px;">113,300</div>
<div class="t r" style="left:426.5px;width:100px;top:212px;height:18px;line-height:18px;">113,300</div>
<div style="left:75px;top:230px;width:1px;height:18px;background-image:linear-gradient(#a0a0a0 50%,transparent 50%);background-size:1px 2px;background-position:0 1px;"></div>
<div style="left:75px;top:239px;width:9px;height:1px;background-image:linear-gradient(90deg,#a0a0a0 50%,transparent 50%);background-size:2px 1px;background-position:0px 0;"></div>
<div style="left:39px;top:230px;width:1px;height:18px;background-image:linear-gradient(#a0a0a0 50%,transparent 50%);background-size:1px 2px;background-position:0 1px;"></div>
<div style="left:57px;top:230px;width:1px;height:18px;background-image:linear-gradient(#a0a0a0 50%,transparent 50%);background-size:1px 2px;background-position:0 1px;"></div>
<svg class="i" style="left:92px;top:235px" width="9" height="8" viewBox="0 0 9 8"><use href="#ic-arr"/></svg>
<div class="t" style="left:110.2px;top:230px;height:18px;line-height:18px;letter-spacing:-0.08px;">12 01 05  Odpad…</div>
<div class="t r" style="left:216.5px;width:100px;top:230px;height:18px;line-height:18px;">0,000</div>
<div class="t r" style="left:326.5px;width:100px;top:230px;height:18px;line-height:18px;">2,420</div>
<div class="t r" style="left:426.5px;width:100px;top:230px;height:18px;line-height:18px;">2,420</div>
<div style="left:75px;top:248px;width:1px;height:5px;background-image:linear-gradient(#a0a0a0 50%,transparent 50%);background-size:1px 2px;background-position:0 1px;"></div>
<div style="left:75px;top:262px;width:1px;height:4px;background-image:linear-gradient(#a0a0a0 50%,transparent 50%);background-size:1px 2px;background-position:0 1px;"></div>
<div style="left:79px;top:257px;width:5px;height:1px;background-image:linear-gradient(90deg,#a0a0a0 50%,transparent 50%);background-size:2px 1px;background-position:0px 0;"></div>
<div style="left:39px;top:248px;width:1px;height:18px;background-image:linear-gradient(#a0a0a0 50%,transparent 50%);background-size:1px 2px;background-position:0 1px;"></div>
<div style="left:57px;top:248px;width:1px;height:18px;background-image:linear-gradient(#a0a0a0 50%,transparent 50%);background-size:1px 2px;background-position:0 1px;"></div>
<div class="bx" style="left:70px;top:253px;width:9px;height:9px;"><i style="left:1px;top:3px;width:5px;height:1px"></i><i style="left:3px;top:1px;width:1px;height:5px"></i></div>
<svg class="i" style="left:92px;top:253px" width="9" height="8" viewBox="0 0 9 8"><use href="#ic-arr"/></svg>
<div class="t" style="left:110.2px;top:248px;height:18px;line-height:18px;letter-spacing:-0.08px;">15 01 01  Opako…</div>
<div class="t r" style="left:216.5px;width:100px;top:248px;height:18px;line-height:18px;">-42,740</div>
<div class="t r" style="left:326.5px;width:100px;top:248px;height:18px;line-height:18px;">2,920</div>
<div class="t r" style="left:426.5px;width:100px;top:248px;height:18px;line-height:18px;color:#f00;">-39,820</div>
<div style="left:75px;top:266px;width:1px;height:5px;background-image:linear-gradient(#a0a0a0 50%,transparent 50%);background-size:1px 2px;background-position:0 1px;"></div>
<div style="left:75px;top:280px;width:1px;height:4px;background-image:linear-gradient(#a0a0a0 50%,transparent 50%);background-size:1px 2px;background-position:0 1px;"></div>
<div style="left:79px;top:275px;width:5px;height:1px;background-image:linear-gradient(90deg,#a0a0a0 50%,transparent 50%);background-size:2px 1px;background-position:0px 0;"></div>
<div style="left:39px;top:266px;width:1px;height:18px;background-image:linear-gradient(#a0a0a0 50%,transparent 50%);background-size:1px 2px;background-position:0 1px;"></div>
<div style="left:57px;top:266px;width:1px;height:18px;background-image:linear-gradient(#a0a0a0 50%,transparent 50%);background-size:1px 2px;background-position:0 1px;"></div>
<div class="bx" style="left:70px;top:271px;width:9px;height:9px;"><i style="left:1px;top:3px;width:5px;height:1px"></i></div>
<svg class="i" style="left:92px;top:271px" width="9" height="8" viewBox="0 0 9 8"><use href="#ic-arr"/></svg>
<div class="t" style="left:110.2px;top:266px;height:18px;line-height:18px;letter-spacing:-0.08px;">15 01 02  Opako…</div>
<div class="t r" style="left:216.5px;width:100px;top:266px;height:18px;line-height:18px;">-81,690</div>
<div class="t r" style="left:326.5px;width:100px;top:266px;height:18px;line-height:18px;">10,270</div>
<div class="t r" style="left:426.5px;width:100px;top:266px;height:18px;line-height:18px;color:#f00;">-71,420</div>
<div style="left:12px;top:284px;width:531px;height:18px;background:#3399ff;"></div>
<div style="left:12px;top:284px;width:199px;height:18px;border:1px dotted #d47418;"></div>
<div style="left:211px;top:284px;width:1px;height:18px;background:#fff;"></div>
<div style="left:321px;top:284px;width:1px;height:18px;background:#fff;"></div>
<div style="left:431px;top:284px;width:1px;height:18px;background:#fff;"></div>
<div style="left:531px;top:284px;width:1px;height:18px;background:#fff;"></div>
<div style="left:93px;top:284px;width:1px;height:18px;background-image:linear-gradient(#fff 50%,transparent 50%);background-size:1px 2px;background-position:0 1px;"></div>
<div style="left:93px;top:293px;width:9px;height:1px;background-image:linear-gradient(90deg,#fff 50%,transparent 50%);background-size:2px 1px;background-position:0px 0;"></div>
<div style="left:39px;top:284px;width:1px;height:18px;background-image:linear-gradient(#fff 50%,transparent 50%);background-size:1px 2px;background-position:0 1px;"></div>
<div style="left:57px;top:284px;width:1px;height:18px;background-image:linear-gradient(#fff 50%,transparent 50%);background-size:1px 2px;background-position:0 1px;"></div>
<div style="left:75px;top:284px;width:1px;height:18px;background-image:linear-gradient(#fff 50%,transparent 50%);background-size:1px 2px;background-position:0 1px;"></div>
<svg class="i" style="left:110px;top:289px" width="9" height="8" viewBox="0 0 9 8"><use href="#ic-arr"/></svg>
<div class="t" style="left:128.2px;top:284px;height:18px;line-height:18px;color:#fff;letter-spacing:-0.08px;">15 01 02  Op…</div>
<div class="t r" style="left:216.5px;width:100px;top:284px;height:18px;line-height:18px;color:#fff;">-58,080</div>
<div class="t r" style="left:326.5px;width:100px;top:284px;height:18px;line-height:18px;color:#fff;">10,270</div>
<div class="t r" style="left:426.5px;width:100px;top:284px;height:18px;line-height:18px;color:#fff;">-47,810</div>
<div style="left:93px;top:302px;width:1px;height:18px;background-image:linear-gradient(#a0a0a0 50%,transparent 50%);background-size:1px 2px;background-position:0 1px;"></div>
<div style="left:93px;top:311px;width:9px;height:1px;background-image:linear-gradient(90deg,#a0a0a0 50%,transparent 50%);background-size:2px 1px;background-position:0px 0;"></div>
<div style="left:39px;top:302px;width:1px;height:18px;background-image:linear-gradient(#a0a0a0 50%,transparent 50%);background-size:1px 2px;background-position:0 1px;"></div>
<div style="left:57px;top:302px;width:1px;height:18px;background-image:linear-gradient(#a0a0a0 50%,transparent 50%);background-size:1px 2px;background-position:0 1px;"></div>
<div style="left:75px;top:302px;width:1px;height:18px;background-image:linear-gradient(#a0a0a0 50%,transparent 50%);background-size:1px 2px;background-position:0 1px;"></div>
<svg class="i" style="left:110px;top:307px" width="9" height="8" viewBox="0 0 9 8"><use href="#ic-arr"/></svg>
<div class="t" style="left:128.2px;top:302px;height:18px;line-height:18px;letter-spacing:-0.08px;">15 01 02 A  O…</div>
<div class="t r" style="left:216.5px;width:100px;top:302px;height:18px;line-height:18px;">-5,600</div>
<div class="t r" style="left:326.5px;width:100px;top:302px;height:18px;line-height:18px;">0,000</div>
<div class="t r" style="left:426.5px;width:100px;top:302px;height:18px;line-height:18px;color:#f00;">-5,600</div>
<div style="left:93px;top:320px;width:1px;height:18px;background-image:linear-gradient(#a0a0a0 50%,transparent 50%);background-size:1px 2px;background-position:0 1px;"></div>
<div style="left:93px;top:329px;width:9px;height:1px;background-image:linear-gradient(90deg,#a0a0a0 50%,transparent 50%);background-size:2px 1px;background-position:0px 0;"></div>
<div style="left:39px;top:320px;width:1px;height:18px;background-image:linear-gradient(#a0a0a0 50%,transparent 50%);background-size:1px 2px;background-position:0 1px;"></div>
<div style="left:57px;top:320px;width:1px;height:18px;background-image:linear-gradient(#a0a0a0 50%,transparent 50%);background-size:1px 2px;background-position:0 1px;"></div>
<div style="left:75px;top:320px;width:1px;height:18px;background-image:linear-gradient(#a0a0a0 50%,transparent 50%);background-size:1px 2px;background-position:0 1px;"></div>
<svg class="i" style="left:110px;top:325px" width="9" height="8" viewBox="0 0 9 8"><use href="#ic-arr"/></svg>
<div class="t" style="left:128.2px;top:320px;height:18px;line-height:18px;letter-spacing:-0.08px;">15 01 02 B  O…</div>
<div class="t r" style="left:216.5px;width:100px;top:320px;height:18px;line-height:18px;">-5,800</div>
<div class="t r" style="left:326.5px;width:100px;top:320px;height:18px;line-height:18px;">0,000</div>
<div class="t r" style="left:426.5px;width:100px;top:320px;height:18px;line-height:18px;color:#f00;">-5,800</div>
<div style="left:93px;top:338px;width:1px;height:18px;background-image:linear-gradient(#a0a0a0 50%,transparent 50%);background-size:1px 2px;background-position:0 1px;"></div>
<div style="left:93px;top:347px;width:9px;height:1px;background-image:linear-gradient(90deg,#a0a0a0 50%,transparent 50%);background-size:2px 1px;background-position:0px 0;"></div>
<div style="left:39px;top:338px;width:1px;height:18px;background-image:linear-gradient(#a0a0a0 50%,transparent 50%);background-size:1px 2px;background-position:0 1px;"></div>
<div style="left:57px;top:338px;width:1px;height:18px;background-image:linear-gradient(#a0a0a0 50%,transparent 50%);background-size:1px 2px;background-position:0 1px;"></div>
<div style="left:75px;top:338px;width:1px;height:18px;background-image:linear-gradient(#a0a0a0 50%,transparent 50%);background-size:1px 2px;background-position:0 1px;"></div>
<svg class="i" style="left:110px;top:343px" width="9" height="8" viewBox="0 0 9 8"><use href="#ic-arr"/></svg>
<div class="t" style="left:128.2px;top:338px;height:18px;line-height:18px;letter-spacing:-0.08px;">15 01 02 C  O…</div>
<div class="t r" style="left:216.5px;width:100px;top:338px;height:18px;line-height:18px;">-5,150</div>
<div class="t r" style="left:326.5px;width:100px;top:338px;height:18px;line-height:18px;">0,000</div>
<div class="t r" style="left:426.5px;width:100px;top:338px;height:18px;line-height:18px;color:#f00;">-5,150</div>
<div style="left:93px;top:356px;width:1px;height:10px;background-image:linear-gradient(#a0a0a0 50%,transparent 50%);background-size:1px 2px;background-position:0 1px;"></div>
<div style="left:93px;top:365px;width:9px;height:1px;background-image:linear-gradient(90deg,#a0a0a0 50%,transparent 50%);background-size:2px 1px;background-position:0px 0;"></div>
<div style="left:39px;top:356px;width:1px;height:18px;background-image:linear-gradient(#a0a0a0 50%,transparent 50%);background-size:1px 2px;background-position:0 1px;"></div>
<div style="left:57px;top:356px;width:1px;height:18px;background-image:linear-gradient(#a0a0a0 50%,transparent 50%);background-size:1px 2px;background-position:0 1px;"></div>
<div style="left:75px;top:356px;width:1px;height:18px;background-image:linear-gradient(#a0a0a0 50%,transparent 50%);background-size:1px 2px;background-position:0 1px;"></div>
<svg class="i" style="left:110px;top:361px" width="9" height="8" viewBox="0 0 9 8"><use href="#ic-arr"/></svg>
<div class="t" style="left:128.2px;top:356px;height:18px;line-height:18px;letter-spacing:-0.08px;">15 01 02 D  O…</div>
<div class="t r" style="left:216.5px;width:100px;top:356px;height:18px;line-height:18px;">-7,060</div>
<div class="t r" style="left:326.5px;width:100px;top:356px;height:18px;line-height:18px;">0,000</div>
<div class="t r" style="left:426.5px;width:100px;top:356px;height:18px;line-height:18px;color:#f00;">-7,060</div>
<div style="left:75px;top:374px;width:1px;height:18px;background-image:linear-gradient(#a0a0a0 50%,transparent 50%);background-size:1px 2px;background-position:0 1px;"></div>
<div style="left:75px;top:383px;width:9px;height:1px;background-image:linear-gradient(90deg,#a0a0a0 50%,transparent 50%);background-size:2px 1px;background-position:0px 0;"></div>
<div style="left:39px;top:374px;width:1px;height:18px;background-image:linear-gradient(#a0a0a0 50%,transparent 50%);background-size:1px 2px;background-position:0 1px;"></div>
<div style="left:57px;top:374px;width:1px;height:18px;background-image:linear-gradient(#a0a0a0 50%,transparent 50%);background-size:1px 2px;background-position:0 1px;"></div>
<svg class="i" style="left:92px;top:379px" width="9" height="8" viewBox="0 0 9 8"><use href="#ic-arr"/></svg>
<div class="t" style="left:110.2px;top:374px;height:18px;line-height:18px;letter-spacing:-0.08px;">15 01 05  Opako…</div>
<div class="t r" style="left:216.5px;width:100px;top:374px;height:18px;line-height:18px;">0,000</div>
<div class="t r" style="left:326.5px;width:100px;top:374px;height:18px;line-height:18px;">7,960</div>
<div class="t r" style="left:426.5px;width:100px;top:374px;height:18px;line-height:18px;">7,960</div>
<div style="left:75px;top:392px;width:1px;height:5px;background-image:linear-gradient(#a0a0a0 50%,transparent 50%);background-size:1px 2px;background-position:0 1px;"></div>
<div style="left:75px;top:406px;width:1px;height:4px;background-image:linear-gradient(#a0a0a0 50%,transparent 50%);background-size:1px 2px;background-position:0 1px;"></div>
<div style="left:79px;top:401px;width:5px;height:1px;background-image:linear-gradient(90deg,#a0a0a0 50%,transparent 50%);background-size:2px 1px;background-position:0px 0;"></div>
<div style="left:39px;top:392px;width:1px;height:18px;background-image:linear-gradient(#a0a0a0 50%,transparent 50%);background-size:1px 2px;background-position:0 1px;"></div>
<div style="left:57px;top:392px;width:1px;height:18px;background-image:linear-gradient(#a0a0a0 50%,transparent 50%);background-size:1px 2px;background-position:0 1px;"></div>
<div class="bx" style="left:70px;top:397px;width:9px;height:9px;"><i style="left:1px;top:3px;width:5px;height:1px"></i><i style="left:3px;top:1px;width:1px;height:5px"></i></div>
<svg class="i" style="left:92px;top:397px" width="9" height="8" viewBox="0 0 9 8"><use href="#ic-arr"/></svg>
<div class="t" style="left:110.2px;top:392px;height:18px;line-height:18px;letter-spacing:-0.08px;">15 01 06  Zmiesz…</div>
<div class="t r" style="left:216.5px;width:100px;top:392px;height:18px;line-height:18px;">0,000</div>
<div class="t r" style="left:326.5px;width:100px;top:392px;height:18px;line-height:18px;">96,700</div>
<div class="t r" style="left:426.5px;width:100px;top:392px;height:18px;line-height:18px;">96,700</div>
<div style="left:75px;top:410px;width:1px;height:5px;background-image:linear-gradient(#a0a0a0 50%,transparent 50%);background-size:1px 2px;background-position:0 1px;"></div>
<div style="left:75px;top:424px;width:1px;height:4px;background-image:linear-gradient(#a0a0a0 50%,transparent 50%);background-size:1px 2px;background-position:0 1px;"></div>
<div style="left:79px;top:419px;width:5px;height:1px;background-image:linear-gradient(90deg,#a0a0a0 50%,transparent 50%);background-size:2px 1px;background-position:0px 0;"></div>
<div style="left:39px;top:410px;width:1px;height:18px;background-image:linear-gradient(#a0a0a0 50%,transparent 50%);background-size:1px 2px;background-position:0 1px;"></div>
<div style="left:57px;top:410px;width:1px;height:18px;background-image:linear-gradient(#a0a0a0 50%,transparent 50%);background-size:1px 2px;background-position:0 1px;"></div>
<div class="bx" style="left:70px;top:415px;width:9px;height:9px;"><i style="left:1px;top:3px;width:5px;height:1px"></i><i style="left:3px;top:1px;width:1px;height:5px"></i></div>
<svg class="i" style="left:92px;top:415px" width="9" height="8" viewBox="0 0 9 8"><use href="#ic-arr"/></svg>
<div class="t" style="left:110.2px;top:410px;height:18px;line-height:18px;letter-spacing:-0.08px;">15 01 07  Opako…</div>
<div class="t r" style="left:216.5px;width:100px;top:410px;height:18px;line-height:18px;">-17,140</div>
<div class="t r" style="left:326.5px;width:100px;top:410px;height:18px;line-height:18px;">12,370</div>
<div class="t r" style="left:426.5px;width:100px;top:410px;height:18px;line-height:18px;color:#f00;">-4,770</div>
<div style="left:75px;top:428px;width:1px;height:18px;background-image:linear-gradient(#a0a0a0 50%,transparent 50%);background-size:1px 2px;background-position:0 1px;"></div>
<div style="left:75px;top:437px;width:9px;height:1px;background-image:linear-gradient(90deg,#a0a0a0 50%,transparent 50%);background-size:2px 1px;background-position:0px 0;"></div>
<div style="left:39px;top:428px;width:1px;height:18px;background-image:linear-gradient(#a0a0a0 50%,transparent 50%);background-size:1px 2px;background-position:0 1px;"></div>
<div style="left:57px;top:428px;width:1px;height:18px;background-image:linear-gradient(#a0a0a0 50%,transparent 50%);background-size:1px 2px;background-position:0 1px;"></div>
<svg class="i" style="left:92px;top:433px" width="9" height="8" viewBox="0 0 9 8"><use href="#ic-arr"/></svg>
<div class="t" style="left:110.2px;top:428px;height:18px;line-height:18px;letter-spacing:-0.08px;">16 01 03  Zużyte …</div>
<div class="t r" style="left:216.5px;width:100px;top:428px;height:18px;line-height:18px;">0,000</div>
<div class="t r" style="left:326.5px;width:100px;top:428px;height:18px;line-height:18px;">3,700</div>
<div class="t r" style="left:426.5px;width:100px;top:428px;height:18px;line-height:18px;">3,700</div>
<div style="left:75px;top:446px;width:1px;height:18px;background-image:linear-gradient(#a0a0a0 50%,transparent 50%);background-size:1px 2px;background-position:0 1px;"></div>
<div style="left:75px;top:455px;width:9px;height:1px;background-image:linear-gradient(90deg,#a0a0a0 50%,transparent 50%);background-size:2px 1px;background-position:0px 0;"></div>
<div style="left:39px;top:446px;width:1px;height:18px;background-image:linear-gradient(#a0a0a0 50%,transparent 50%);background-size:1px 2px;background-position:0 1px;"></div>
<div style="left:57px;top:446px;width:1px;height:18px;background-image:linear-gradient(#a0a0a0 50%,transparent 50%);background-size:1px 2px;background-position:0 1px;"></div>
<svg class="i" style="left:92px;top:451px" width="9" height="8" viewBox="0 0 9 8"><use href="#ic-arr"/></svg>
<div class="t" style="left:110.2px;top:446px;height:18px;line-height:18px;letter-spacing:-0.08px;">17 01 07  Zmiesz…</div>
<div class="t r" style="left:216.5px;width:100px;top:446px;height:18px;line-height:18px;">0,000</div>
<div class="t r" style="left:326.5px;width:100px;top:446px;height:18px;line-height:18px;">136,680</div>
<div class="t r" style="left:426.5px;width:100px;top:446px;height:18px;line-height:18px;">136,680</div>
<div style="left:75px;top:464px;width:1px;height:18px;background-image:linear-gradient(#a0a0a0 50%,transparent 50%);background-size:1px 2px;background-position:0 1px;"></div>
<div style="left:75px;top:473px;width:9px;height:1px;background-image:linear-gradient(90deg,#a0a0a0 50%,transparent 50%);background-size:2px 1px;background-position:0px 0;"></div>
<div style="left:39px;top:464px;width:1px;height:18px;background-image:linear-gradient(#a0a0a0 50%,transparent 50%);background-size:1px 2px;background-position:0 1px;"></div>
<div style="left:57px;top:464px;width:1px;height:18px;background-image:linear-gradient(#a0a0a0 50%,transparent 50%);background-size:1px 2px;background-position:0 1px;"></div>
<svg class="i" style="left:92px;top:469px" width="9" height="8" viewBox="0 0 9 8"><use href="#ic-arr"/></svg>
<div class="t" style="left:110.2px;top:464px;height:18px;line-height:18px;letter-spacing:-0.08px;">17 02 03  Tworzy…</div>
<div class="t r" style="left:216.5px;width:100px;top:464px;height:18px;line-height:18px;">0,000</div>
<div class="t r" style="left:326.5px;width:100px;top:464px;height:18px;line-height:18px;">3,300</div>
<div class="t r" style="left:426.5px;width:100px;top:464px;height:18px;line-height:18px;">3,300</div>
<div style="left:75px;top:482px;width:1px;height:18px;background-image:linear-gradient(#a0a0a0 50%,transparent 50%);background-size:1px 2px;background-position:0 1px;"></div>
<div style="left:75px;top:491px;width:9px;height:1px;background-image:linear-gradient(90deg,#a0a0a0 50%,transparent 50%);background-size:2px 1px;background-position:0px 0;"></div>
<div style="left:39px;top:482px;width:1px;height:18px;background-image:linear-gradient(#a0a0a0 50%,transparent 50%);background-size:1px 2px;background-position:0 1px;"></div>
<div style="left:57px;top:482px;width:1px;height:18px;background-image:linear-gradient(#a0a0a0 50%,transparent 50%);background-size:1px 2px;background-position:0 1px;"></div>
<svg class="i" style="left:92px;top:487px" width="9" height="8" viewBox="0 0 9 8"><use href="#ic-arr"/></svg>
<div class="t" style="left:110.2px;top:482px;height:18px;line-height:18px;letter-spacing:-0.08px;">17 03 80  Odpad…</div>
<div class="t r" style="left:216.5px;width:100px;top:482px;height:18px;line-height:18px;">0,000</div>
<div class="t r" style="left:326.5px;width:100px;top:482px;height:18px;line-height:18px;">13,140</div>
<div class="t r" style="left:426.5px;width:100px;top:482px;height:18px;line-height:18px;">13,140</div>
<div style="left:75px;top:500px;width:1px;height:18px;background-image:linear-gradient(#a0a0a0 50%,transparent 50%);background-size:1px 2px;background-position:0 1px;"></div>
<div style="left:75px;top:509px;width:9px;height:1px;background-image:linear-gradient(90deg,#a0a0a0 50%,transparent 50%);background-size:2px 1px;background-position:0px 0;"></div>
<div style="left:39px;top:500px;width:1px;height:18px;background-image:linear-gradient(#a0a0a0 50%,transparent 50%);background-size:1px 2px;background-position:0 1px;"></div>
<div style="left:57px;top:500px;width:1px;height:18px;background-image:linear-gradient(#a0a0a0 50%,transparent 50%);background-size:1px 2px;background-position:0 1px;"></div>
<svg class="i" style="left:92px;top:505px" width="9" height="8" viewBox="0 0 9 8"><use href="#ic-arr"/></svg>
<div class="t" style="left:110.2px;top:500px;height:18px;line-height:18px;letter-spacing:-0.08px;">17 06 05*  Materi…</div>
<div class="t r" style="left:216.5px;width:100px;top:500px;height:18px;line-height:18px;">0,000</div>
<div class="t r" style="left:326.5px;width:100px;top:500px;height:18px;line-height:18px;">108,730</div>
<div class="t r" style="left:426.5px;width:100px;top:500px;height:18px;line-height:18px;">108,730</div>
<div style="left:75px;top:518px;width:1px;height:18px;background-image:linear-gradient(#a0a0a0 50%,transparent 50%);background-size:1px 2px;background-position:0 1px;"></div>
<div style="left:75px;top:527px;width:9px;height:1px;background-image:linear-gradient(90deg,#a0a0a0 50%,transparent 50%);background-size:2px 1px;background-position:0px 0;"></div>
<div style="left:39px;top:518px;width:1px;height:18px;background-image:linear-gradient(#a0a0a0 50%,transparent 50%);background-size:1px 2px;background-position:0 1px;"></div>
<div style="left:57px;top:518px;width:1px;height:18px;background-image:linear-gradient(#a0a0a0 50%,transparent 50%);background-size:1px 2px;background-position:0 1px;"></div>
<svg class="i" style="left:92px;top:523px" width="9" height="8" viewBox="0 0 9 8"><use href="#ic-arr"/></svg>
<div class="t" style="left:110.2px;top:518px;height:18px;line-height:18px;letter-spacing:-0.08px;">17 09 04  Zmiesz…</div>
<div class="t r" style="left:216.5px;width:100px;top:518px;height:18px;line-height:18px;">0,000</div>
<div class="t r" style="left:326.5px;width:100px;top:518px;height:18px;line-height:18px;">45,360</div>
<div class="t r" style="left:426.5px;width:100px;top:518px;height:18px;line-height:18px;">45,360</div>
<div style="left:75px;top:536px;width:1px;height:18px;background-image:linear-gradient(#a0a0a0 50%,transparent 50%);background-size:1px 2px;background-position:0 1px;"></div>
<div style="left:75px;top:545px;width:9px;height:1px;background-image:linear-gradient(90deg,#a0a0a0 50%,transparent 50%);background-size:2px 1px;background-position:0px 0;"></div>
<div style="left:39px;top:536px;width:1px;height:18px;background-image:linear-gradient(#a0a0a0 50%,transparent 50%);background-size:1px 2px;background-position:0 1px;"></div>
<div style="left:57px;top:536px;width:1px;height:18px;background-image:linear-gradient(#a0a0a0 50%,transparent 50%);background-size:1px 2px;background-position:0 1px;"></div>
<svg class="i" style="left:92px;top:541px" width="9" height="8" viewBox="0 0 9 8"><use href="#ic-arr"/></svg>
<div class="t" style="left:110.2px;top:536px;height:18px;line-height:18px;letter-spacing:-0.15px;">19 05 03  Kompos…</div>
<div class="t r" style="left:216.5px;width:100px;top:536px;height:18px;line-height:18px;">-44,440</div>
<div class="t r" style="left:326.5px;width:100px;top:536px;height:18px;line-height:18px;">0,000</div>
<div class="t r" style="left:426.5px;width:100px;top:536px;height:18px;line-height:18px;color:#f00;">-44,440</div>
<div style="left:75px;top:554px;width:1px;height:18px;background-image:linear-gradient(#a0a0a0 50%,transparent 50%);background-size:1px 2px;background-position:0 1px;"></div>
<div style="left:75px;top:563px;width:9px;height:1px;background-image:linear-gradient(90deg,#a0a0a0 50%,transparent 50%);background-size:2px 1px;background-position:0px 0;"></div>
<div style="left:39px;top:554px;width:1px;height:18px;background-image:linear-gradient(#a0a0a0 50%,transparent 50%);background-size:1px 2px;background-position:0 1px;"></div>
<div style="left:57px;top:554px;width:1px;height:18px;background-image:linear-gradient(#a0a0a0 50%,transparent 50%);background-size:1px 2px;background-position:0 1px;"></div>
<svg class="i" style="left:92px;top:559px" width="9" height="8" viewBox="0 0 9 8"><use href="#ic-arr"/></svg>
<div class="t" style="left:110.2px;top:554px;height:18px;line-height:18px;letter-spacing:-0.08px;">19 08 01  Skratki</div>
<div class="t r" style="left:216.5px;width:100px;top:554px;height:18px;line-height:18px;">0,000</div>
<div class="t r" style="left:326.5px;width:100px;top:554px;height:18px;line-height:18px;">5,200</div>
<div class="t r" style="left:426.5px;width:100px;top:554px;height:18px;line-height:18px;">5,200</div>
<div style="left:75px;top:572px;width:1px;height:18px;background-image:linear-gradient(#a0a0a0 50%,transparent 50%);background-size:1px 2px;background-position:0 1px;"></div>
<div style="left:75px;top:581px;width:9px;height:1px;background-image:linear-gradient(90deg,#a0a0a0 50%,transparent 50%);background-size:2px 1px;background-position:0px 0;"></div>
<div style="left:39px;top:572px;width:1px;height:18px;background-image:linear-gradient(#a0a0a0 50%,transparent 50%);background-size:1px 2px;background-position:0 1px;"></div>
<div style="left:57px;top:572px;width:1px;height:18px;background-image:linear-gradient(#a0a0a0 50%,transparent 50%);background-size:1px 2px;background-position:0 1px;"></div>
<svg class="i" style="left:92px;top:577px" width="9" height="8" viewBox="0 0 9 8"><use href="#ic-arr"/></svg>
<div class="t" style="left:110.2px;top:572px;height:18px;line-height:18px;letter-spacing:-0.08px;">19 08 05  Ustabili…</div>
<div class="t r" style="left:216.5px;width:100px;top:572px;height:18px;line-height:18px;">-78,920</div>
<div class="t r" style="left:326.5px;width:100px;top:572px;height:18px;line-height:18px;">120,920</div>
<div class="t r" style="left:426.5px;width:100px;top:572px;height:18px;line-height:18px;">42,000</div>
<div style="left:75px;top:590px;width:1px;height:5px;background-image:linear-gradient(#a0a0a0 50%,transparent 50%);background-size:1px 2px;background-position:0 1px;"></div>
<div style="left:75px;top:604px;width:1px;height:4px;background-image:linear-gradient(#a0a0a0 50%,transparent 50%);background-size:1px 2px;background-position:0 1px;"></div>
<div style="left:79px;top:599px;width:5px;height:1px;background-image:linear-gradient(90deg,#a0a0a0 50%,transparent 50%);background-size:2px 1px;background-position:0px 0;"></div>
<div style="left:39px;top:590px;width:1px;height:18px;background-image:linear-gradient(#a0a0a0 50%,transparent 50%);background-size:1px 2px;background-position:0 1px;"></div>
<div style="left:57px;top:590px;width:1px;height:18px;background-image:linear-gradient(#a0a0a0 50%,transparent 50%);background-size:1px 2px;background-position:0 1px;"></div>
<div class="bx" style="left:70px;top:595px;width:9px;height:9px;"><i style="left:1px;top:3px;width:5px;height:1px"></i><i style="left:3px;top:1px;width:1px;height:5px"></i></div>
<svg class="i" style="left:92px;top:595px" width="9" height="8" viewBox="0 0 9 8"><use href="#ic-arr"/></svg>
<div class="t" style="left:110.2px;top:590px;height:18px;line-height:18px;letter-spacing:-0.08px;">19 12 02  Metale …</div>
<div class="t r" style="left:216.5px;width:100px;top:590px;height:18px;line-height:18px;">-11,880</div>
<div class="t r" style="left:326.5px;width:100px;top:590px;height:18px;line-height:18px;">0,000</div>
<div class="t r" style="left:426.5px;width:100px;top:590px;height:18px;line-height:18px;color:#f00;">-11,880</div>
<div style="left:75px;top:608px;width:1px;height:18px;background-image:linear-gradient(#a0a0a0 50%,transparent 50%);background-size:1px 2px;background-position:0 1px;"></div>
<div style="left:75px;top:617px;width:9px;height:1px;background-image:linear-gradient(90deg,#a0a0a0 50%,transparent 50%);background-size:2px 1px;background-position:0px 0;"></div>
<div style="left:39px;top:608px;width:1px;height:18px;background-image:linear-gradient(#a0a0a0 50%,transparent 50%);background-size:1px 2px;background-position:0 1px;"></div>
<div style="left:57px;top:608px;width:1px;height:18px;background-image:linear-gradient(#a0a0a0 50%,transparent 50%);background-size:1px 2px;background-position:0 1px;"></div>
<svg class="i" style="left:92px;top:613px" width="9" height="8" viewBox="0 0 9 8"><use href="#ic-arr"/></svg>
<div class="t" style="left:110.2px;top:608px;height:18px;line-height:18px;letter-spacing:-0.08px;">19 12 10  Odpad…</div>
<div class="t r" style="left:216.5px;width:100px;top:608px;height:18px;line-height:18px;">-929,340</div>
<div class="t r" style="left:326.5px;width:100px;top:608px;height:18px;line-height:18px;">0,000</div>
<div class="t r" style="left:426.5px;width:100px;top:608px;height:18px;line-height:18px;color:#f00;">-929,340</div>
<div style="left:75px;top:626px;width:1px;height:5px;background-image:linear-gradient(#a0a0a0 50%,transparent 50%);background-size:1px 2px;background-position:0 1px;"></div>
<div style="left:75px;top:640px;width:1px;height:4px;background-image:linear-gradient(#a0a0a0 50%,transparent 50%);background-size:1px 2px;background-position:0 1px;"></div>
<div style="left:79px;top:635px;width:5px;height:1px;background-image:linear-gradient(90deg,#a0a0a0 50%,transparent 50%);background-size:2px 1px;background-position:0px 0;"></div>
<div style="left:39px;top:626px;width:1px;height:18px;background-image:linear-gradient(#a0a0a0 50%,transparent 50%);background-size:1px 2px;background-position:0 1px;"></div>
<div style="left:57px;top:626px;width:1px;height:18px;background-image:linear-gradient(#a0a0a0 50%,transparent 50%);background-size:1px 2px;background-position:0 1px;"></div>
<div class="bx" style="left:70px;top:631px;width:9px;height:9px;"><i style="left:1px;top:3px;width:5px;height:1px"></i><i style="left:3px;top:1px;width:1px;height:5px"></i></div>
<svg class="i" style="left:92px;top:631px" width="9" height="8" viewBox="0 0 9 8"><use href="#ic-arr"/></svg>
<div class="t" style="left:110.2px;top:626px;height:18px;line-height:18px;letter-spacing:-0.08px;">19 12 12  Inne od…</div>
<div class="t r" style="left:216.5px;width:100px;top:626px;height:18px;line-height:18px;">-1314,180</div>
<div class="t r" style="left:326.5px;width:100px;top:626px;height:18px;line-height:18px;">0,000</div>
<div class="t r" style="left:426.5px;width:100px;top:626px;height:18px;line-height:18px;color:#f00;">-1314,180</div>
<div style="left:75px;top:644px;width:1px;height:18px;background-image:linear-gradient(#a0a0a0 50%,transparent 50%);background-size:1px 2px;background-position:0 1px;"></div>
<div style="left:75px;top:653px;width:9px;height:1px;background-image:linear-gradient(90deg,#a0a0a0 50%,transparent 50%);background-size:2px 1px;background-position:0px 0;"></div>
<div style="left:39px;top:644px;width:1px;height:18px;background-image:linear-gradient(#a0a0a0 50%,transparent 50%);background-size:1px 2px;background-position:0 1px;"></div>
<div style="left:57px;top:644px;width:1px;height:18px;background-image:linear-gradient(#a0a0a0 50%,transparent 50%);background-size:1px 2px;background-position:0 1px;"></div>
<svg class="i" style="left:92px;top:649px" width="9" height="8" viewBox="0 0 9 8"><use href="#ic-arr"/></svg>
<div class="t" style="left:110.2px;top:644px;height:18px;line-height:18px;letter-spacing:-0.08px;">20 01 08  Odpad…</div>
<div class="t r" style="left:216.5px;width:100px;top:644px;height:18px;line-height:18px;">0,000</div>
<div class="t r" style="left:326.5px;width:100px;top:644px;height:18px;line-height:18px;">16,490</div>
<div class="t r" style="left:426.5px;width:100px;top:644px;height:18px;line-height:18px;">16,490</div>
<div style="left:75px;top:662px;width:1px;height:18px;background-image:linear-gradient(#a0a0a0 50%,transparent 50%);background-size:1px 2px;background-position:0 1px;"></div>
<div style="left:75px;top:671px;width:9px;height:1px;background-image:linear-gradient(90deg,#a0a0a0 50%,transparent 50%);background-size:2px 1px;background-position:0px 0;"></div>
<div style="left:39px;top:662px;width:1px;height:18px;background-image:linear-gradient(#a0a0a0 50%,transparent 50%);background-size:1px 2px;background-position:0 1px;"></div>
<div style="left:57px;top:662px;width:1px;height:18px;background-image:linear-gradient(#a0a0a0 50%,transparent 50%);background-size:1px 2px;background-position:0 1px;"></div>
<svg class="i" style="left:92px;top:667px" width="9" height="8" viewBox="0 0 9 8"><use href="#ic-arr"/></svg>
<div class="t" style="left:110.2px;top:662px;height:18px;line-height:18px;letter-spacing:-0.08px;">20 01 39  Tworzy…</div>
<div class="t r" style="left:216.5px;width:100px;top:662px;height:18px;line-height:18px;">0,000</div>
<div class="t r" style="left:326.5px;width:100px;top:662px;height:18px;line-height:18px;">12,980</div>
<div class="t r" style="left:426.5px;width:100px;top:662px;height:18px;line-height:18px;">12,980</div>
<div style="left:75px;top:680px;width:1px;height:18px;background-image:linear-gradient(#a0a0a0 50%,transparent 50%);background-size:1px 2px;background-position:0 1px;"></div>
<div style="left:75px;top:689px;width:9px;height:1px;background-image:linear-gradient(90deg,#a0a0a0 50%,transparent 50%);background-size:2px 1px;background-position:0px 0;"></div>
<div style="left:39px;top:680px;width:1px;height:18px;background-image:linear-gradient(#a0a0a0 50%,transparent 50%);background-size:1px 2px;background-position:0 1px;"></div>
<div style="left:57px;top:680px;width:1px;height:18px;background-image:linear-gradient(#a0a0a0 50%,transparent 50%);background-size:1px 2px;background-position:0 1px;"></div>
<svg class="i" style="left:92px;top:685px" width="9" height="8" viewBox="0 0 9 8"><use href="#ic-arr"/></svg>
<div class="t" style="left:110.2px;top:680px;height:18px;line-height:18px;letter-spacing:-0.08px;">20 02 01  Odpad…</div>
<div class="t r" style="left:216.5px;width:100px;top:680px;height:18px;line-height:18px;">0,000</div>
<div class="t r" style="left:326.5px;width:100px;top:680px;height:18px;line-height:18px;">148,410</div>
<div class="t r" style="left:426.5px;width:100px;top:680px;height:18px;line-height:18px;">148,410</div>
<div style="left:75px;top:698px;width:1px;height:18px;background-image:linear-gradient(#a0a0a0 50%,transparent 50%);background-size:1px 2px;background-position:0 1px;"></div>
<div style="left:75px;top:707px;width:9px;height:1px;background-image:linear-gradient(90deg,#a0a0a0 50%,transparent 50%);background-size:2px 1px;background-position:0px 0;"></div>
<div style="left:39px;top:698px;width:1px;height:18px;background-image:linear-gradient(#a0a0a0 50%,transparent 50%);background-size:1px 2px;background-position:0 1px;"></div>
<div style="left:57px;top:698px;width:1px;height:18px;background-image:linear-gradient(#a0a0a0 50%,transparent 50%);background-size:1px 2px;background-position:0 1px;"></div>
<svg class="i" style="left:92px;top:703px" width="9" height="8" viewBox="0 0 9 8"><use href="#ic-arr"/></svg>
<div class="t" style="left:110.2px;top:698px;height:18px;line-height:18px;letter-spacing:-0.08px;">20 02 03  Inne od…</div>
<div class="t r" style="left:216.5px;width:100px;top:698px;height:18px;line-height:18px;">0,000</div>
<div class="t r" style="left:326.5px;width:100px;top:698px;height:18px;line-height:18px;">26,500</div>
<div class="t r" style="left:426.5px;width:100px;top:698px;height:18px;line-height:18px;">26,500</div>
<div style="left:75px;top:716px;width:1px;height:18px;background-image:linear-gradient(#a0a0a0 50%,transparent 50%);background-size:1px 2px;background-position:0 1px;"></div>
<div style="left:75px;top:725px;width:9px;height:1px;background-image:linear-gradient(90deg,#a0a0a0 50%,transparent 50%);background-size:2px 1px;background-position:0px 0;"></div>
<div style="left:39px;top:716px;width:1px;height:18px;background-image:linear-gradient(#a0a0a0 50%,transparent 50%);background-size:1px 2px;background-position:0 1px;"></div>
<div style="left:57px;top:716px;width:1px;height:18px;background-image:linear-gradient(#a0a0a0 50%,transparent 50%);background-size:1px 2px;background-position:0 1px;"></div>
<svg class="i" style="left:92px;top:721px" width="9" height="8" viewBox="0 0 9 8"><use href="#ic-arr"/></svg>
<div class="t" style="left:110.2px;top:716px;height:18px;line-height:18px;letter-spacing:-0.08px;">20 03 01  Niesegr…</div>
<div class="t r" style="left:216.5px;width:100px;top:716px;height:18px;line-height:18px;">0,000</div>
<div class="t r" style="left:326.5px;width:100px;top:716px;height:18px;line-height:18px;">4952,860</div>
<div class="t r" style="left:426.5px;width:100px;top:716px;height:18px;line-height:18px;">4952,860</div>
<div style="left:75px;top:734px;width:1px;height:18px;background-image:linear-gradient(#a0a0a0 50%,transparent 50%);background-size:1px 2px;background-position:0 1px;"></div>
<div style="left:75px;top:743px;width:9px;height:1px;background-image:linear-gradient(90deg,#a0a0a0 50%,transparent 50%);background-size:2px 1px;background-position:0px 0;"></div>
<div style="left:39px;top:734px;width:1px;height:18px;background-image:linear-gradient(#a0a0a0 50%,transparent 50%);background-size:1px 2px;background-position:0 1px;"></div>
<div style="left:57px;top:734px;width:1px;height:18px;background-image:linear-gradient(#a0a0a0 50%,transparent 50%);background-size:1px 2px;background-position:0 1px;"></div>
<svg class="i" style="left:92px;top:739px" width="9" height="8" viewBox="0 0 9 8"><use href="#ic-arr"/></svg>
<div class="t" style="left:110.2px;top:734px;height:18px;line-height:18px;letter-spacing:-0.08px;">20 03 07  Odpad…</div>
<div class="t r" style="left:216.5px;width:100px;top:734px;height:18px;line-height:18px;">0,000</div>
<div class="t r" style="left:326.5px;width:100px;top:734px;height:18px;line-height:18px;">1,140</div>
<div class="t r" style="left:426.5px;width:100px;top:734px;height:18px;line-height:18px;">1,140</div>
<div style="left:75px;top:752px;width:1px;height:10px;background-image:linear-gradient(#a0a0a0 50%,transparent 50%);background-size:1px 2px;background-position:0 1px;"></div>
<div style="left:75px;top:761px;width:9px;height:1px;background-image:linear-gradient(90deg,#a0a0a0 50%,transparent 50%);background-size:2px 1px;background-position:0px 0;"></div>
<div style="left:39px;top:752px;width:1px;height:18px;background-image:linear-gradient(#a0a0a0 50%,transparent 50%);background-size:1px 2px;background-position:0 1px;"></div>
<div style="left:57px;top:752px;width:1px;height:18px;background-image:linear-gradient(#a0a0a0 50%,transparent 50%);background-size:1px 2px;background-position:0 1px;"></div>
<svg class="i" style="left:92px;top:757px" width="9" height="8" viewBox="0 0 9 8"><use href="#ic-arr"/></svg>
<div class="t" style="left:110.2px;top:752px;height:18px;line-height:18px;letter-spacing:-0.08px;">20 03 99  Odpad…</div>
<div class="t r" style="left:216.5px;width:100px;top:752px;height:18px;line-height:18px;">0,000</div>
<div class="t r" style="left:326.5px;width:100px;top:752px;height:18px;line-height:18px;">44,340</div>
<div class="t r" style="left:426.5px;width:100px;top:752px;height:18px;line-height:18px;">44,340</div>
<div style="left:57px;top:770px;width:1px;height:5px;background-image:linear-gradient(#a0a0a0 50%,transparent 50%);background-size:1px 2px;background-position:0 1px;"></div>
<div style="left:57px;top:784px;width:1px;height:4px;background-image:linear-gradient(#a0a0a0 50%,transparent 50%);background-size:1px 2px;background-position:0 1px;"></div>
<div style="left:61px;top:779px;width:5px;height:1px;background-image:linear-gradient(90deg,#a0a0a0 50%,transparent 50%);background-size:2px 1px;background-position:0px 0;"></div>
<div style="left:39px;top:770px;width:1px;height:18px;background-image:linear-gradient(#a0a0a0 50%,transparent 50%);background-size:1px 2px;background-position:0 1px;"></div>
<div class="bx" style="left:52px;top:775px;width:9px;height:9px;"><i style="left:1px;top:3px;width:5px;height:1px"></i><i style="left:3px;top:1px;width:1px;height:5px"></i></div>
<svg class="i" style="left:72px;top:772px" width="11" height="14" viewBox="0 0 11 14"><use href="#ic-box"/></svg>
<div class="t" style="left:91.5px;top:770px;height:18px;line-height:18px;">Paliwo alternatywne</div>
<div class="t r" style="left:216.5px;width:100px;top:770px;height:18px;line-height:18px;">0,000</div>
<div class="t r" style="left:326.5px;width:100px;top:770px;height:18px;line-height:18px;">0,000</div>
<div class="t r" style="left:426.5px;width:100px;top:770px;height:18px;line-height:18px;">0,000</div>
<div style="left:57px;top:788px;width:1px;height:5px;background-image:linear-gradient(#a0a0a0 50%,transparent 50%);background-size:1px 2px;background-position:0 1px;"></div>
<div style="left:61px;top:797px;width:5px;height:1px;background-image:linear-gradient(90deg,#a0a0a0 50%,transparent 50%);background-size:2px 1px;background-position:0px 0;"></div>
<div style="left:39px;top:788px;width:1px;height:18px;background-image:linear-gradient(#a0a0a0 50%,transparent 50%);background-size:1px 2px;background-position:0 1px;"></div>
<div class="bx" style="left:52px;top:793px;width:9px;height:9px;"><i style="left:1px;top:3px;width:5px;height:1px"></i><i style="left:3px;top:1px;width:1px;height:5px"></i></div>
<svg class="i" style="left:71px;top:789px" width="16" height="16" viewBox="0 0 16 16"><use href="#ic-box2"/></svg>
<div class="t" style="left:91.5px;top:788px;height:18px;line-height:18px;text-decoration:underline;letter-spacing:-0.66px;">PODSUMOWANIE</div>
<div class="t r" style="left:216.5px;width:100px;top:788px;height:18px;line-height:18px;text-decoration:underline;">-2520,330</div>
<div class="t r" style="left:326.5px;width:100px;top:788px;height:18px;line-height:18px;text-decoration:underline;">5895,710</div>
<div class="t r" style="left:426.5px;width:100px;top:788px;height:18px;line-height:18px;text-decoration:underline;">3375,380</div>
<div style="left:39px;top:806px;width:1px;height:5px;background-image:linear-gradient(#a0a0a0 50%,transparent 50%);background-size:1px 2px;background-position:0 1px;"></div>
<div style="left:39px;top:820px;width:1px;height:4px;background-image:linear-gradient(#a0a0a0 50%,transparent 50%);background-size:1px 2px;background-position:0 1px;"></div>
<div style="left:43px;top:815px;width:5px;height:1px;background-image:linear-gradient(90deg,#a0a0a0 50%,transparent 50%);background-size:2px 1px;background-position:0px 0;"></div>
<div class="bx" style="left:34px;top:811px;width:9px;height:9px;"><i style="left:1px;top:3px;width:5px;height:1px"></i><i style="left:3px;top:1px;width:1px;height:5px"></i></div>
<div class="t" style="left:55.5px;top:806px;height:18px;line-height:18px;">luty</div>
<div class="t r" style="left:216.5px;width:100px;top:806px;height:18px;line-height:18px;">-2969,270</div>
<div class="t r" style="left:326.5px;width:100px;top:806px;height:18px;line-height:18px;">5798,836</div>
<div class="t r" style="left:426.5px;width:100px;top:806px;height:18px;line-height:18px;">2829,566</div>
<div style="left:39px;top:824px;width:1px;height:5px;background-image:linear-gradient(#a0a0a0 50%,transparent 50%);background-size:1px 2px;background-position:0 1px;"></div>
<div style="left:39px;top:838px;width:1px;height:4px;background-image:linear-gradient(#a0a0a0 50%,transparent 50%);background-size:1px 2px;background-position:0 1px;"></div>
<div style="left:43px;top:833px;width:5px;height:1px;background-image:linear-gradient(90deg,#a0a0a0 50%,transparent 50%);background-size:2px 1px;background-position:0px 0;"></div>
<div class="bx" style="left:34px;top:829px;width:9px;height:9px;"><i style="left:1px;top:3px;width:5px;height:1px"></i><i style="left:3px;top:1px;width:1px;height:5px"></i></div>
<div class="t" style="left:55.5px;top:824px;height:18px;line-height:18px;">marzec</div>
<div class="t r" style="left:216.5px;width:100px;top:824px;height:18px;line-height:18px;">-1596,970</div>
<div class="t r" style="left:326.5px;width:100px;top:824px;height:18px;line-height:18px;">6494,164</div>
<div class="t r" style="left:426.5px;width:100px;top:824px;height:18px;line-height:18px;">4897,194</div>
<div style="left:39px;top:842px;width:1px;height:5px;background-image:linear-gradient(#a0a0a0 50%,transparent 50%);background-size:1px 2px;background-position:0 1px;"></div>
<div style="left:39px;top:856px;width:1px;height:4px;background-image:linear-gradient(#a0a0a0 50%,transparent 50%);background-size:1px 2px;background-position:0 1px;"></div>
<div style="left:43px;top:851px;width:5px;height:1px;background-image:linear-gradient(90deg,#a0a0a0 50%,transparent 50%);background-size:2px 1px;background-position:0px 0;"></div>
<div class="bx" style="left:34px;top:847px;width:9px;height:9px;"><i style="left:1px;top:3px;width:5px;height:1px"></i><i style="left:3px;top:1px;width:1px;height:5px"></i></div>
<div class="t" style="left:55.5px;top:842px;height:18px;line-height:18px;">kwiecień</div>
<div class="t r" style="left:216.5px;width:100px;top:842px;height:18px;line-height:18px;">-1147,350</div>
<div class="t r" style="left:326.5px;width:100px;top:842px;height:18px;line-height:18px;">6772,040</div>
<div class="t r" style="left:426.5px;width:100px;top:842px;height:18px;line-height:18px;">5624,690</div>
<div style="left:39px;top:860px;width:1px;height:5px;background-image:linear-gradient(#a0a0a0 50%,transparent 50%);background-size:1px 2px;background-position:0 1px;"></div>
<div style="left:39px;top:874px;width:1px;height:4px;background-image:linear-gradient(#a0a0a0 50%,transparent 50%);background-size:1px 2px;background-position:0 1px;"></div>
<div style="left:43px;top:869px;width:5px;height:1px;background-image:linear-gradient(90deg,#a0a0a0 50%,transparent 50%);background-size:2px 1px;background-position:0px 0;"></div>
<div class="bx" style="left:34px;top:865px;width:9px;height:9px;"><i style="left:1px;top:3px;width:5px;height:1px"></i><i style="left:3px;top:1px;width:1px;height:5px"></i></div>
<div class="t" style="left:55.5px;top:860px;height:18px;line-height:18px;">maj</div>
<div class="t r" style="left:216.5px;width:100px;top:860px;height:18px;line-height:18px;">-1376,990</div>
<div class="t r" style="left:326.5px;width:100px;top:860px;height:18px;line-height:18px;">6715,460</div>
<div class="t r" style="left:426.5px;width:100px;top:860px;height:18px;line-height:18px;">5338,470</div>
<div style="left:39px;top:878px;width:1px;height:5px;background-image:linear-gradient(#a0a0a0 50%,transparent 50%);background-size:1px 2px;background-position:0 1px;"></div>
<div style="left:39px;top:892px;width:1px;height:4px;background-image:linear-gradient(#a0a0a0 50%,transparent 50%);background-size:1px 2px;background-position:0 1px;"></div>
<div style="left:43px;top:887px;width:5px;height:1px;background-image:linear-gradient(90deg,#a0a0a0 50%,transparent 50%);background-size:2px 1px;background-position:0px 0;"></div>
<div class="bx" style="left:34px;top:883px;width:9px;height:9px;"><i style="left:1px;top:3px;width:5px;height:1px"></i><i style="left:3px;top:1px;width:1px;height:5px"></i></div>
<div class="t" style="left:55.5px;top:878px;height:18px;line-height:18px;">czerwiec</div>
<div class="t r" style="left:216.5px;width:100px;top:878px;height:18px;line-height:18px;">-330,330</div>
<div class="t r" style="left:326.5px;width:100px;top:878px;height:18px;line-height:18px;">5412,480</div>
<div class="t r" style="left:426.5px;width:100px;top:878px;height:18px;line-height:18px;">5082,150</div>
<div style="left:39px;top:896px;width:1px;height:5px;background-image:linear-gradient(#a0a0a0 50%,transparent 50%);background-size:1px 2px;background-position:0 1px;"></div>
<div style="left:39px;top:910px;width:1px;height:4px;background-image:linear-gradient(#a0a0a0 50%,transparent 50%);background-size:1px 2px;background-position:0 1px;"></div>
<div style="left:43px;top:905px;width:5px;height:1px;background-image:linear-gradient(90deg,#a0a0a0 50%,transparent 50%);background-size:2px 1px;background-position:0px 0;"></div>
<div class="bx" style="left:34px;top:901px;width:9px;height:9px;"><i style="left:1px;top:3px;width:5px;height:1px"></i><i style="left:3px;top:1px;width:1px;height:5px"></i></div>
<div class="t" style="left:55.5px;top:896px;height:18px;line-height:18px;">lipiec</div>
<div class="t r" style="left:216.5px;width:100px;top:896px;height:18px;line-height:18px;">0,000</div>
<div class="t r" style="left:326.5px;width:100px;top:896px;height:18px;line-height:18px;">0,300</div>
<div class="t r" style="left:426.5px;width:100px;top:896px;height:18px;line-height:18px;">0,300</div>
<div style="left:39px;top:914px;width:1px;height:5px;background-image:linear-gradient(#a0a0a0 50%,transparent 50%);background-size:1px 2px;background-position:0 1px;"></div>
<div style="left:39px;top:928px;width:1px;height:4px;background-image:linear-gradient(#a0a0a0 50%,transparent 50%);background-size:1px 2px;background-position:0 1px;"></div>
<div style="left:43px;top:923px;width:5px;height:1px;background-image:linear-gradient(90deg,#a0a0a0 50%,transparent 50%);background-size:2px 1px;background-position:0px 0;"></div>
<div class="bx" style="left:34px;top:919px;width:9px;height:9px;"><i style="left:1px;top:3px;width:5px;height:1px"></i><i style="left:3px;top:1px;width:1px;height:5px"></i></div>
<div class="t" style="left:55.5px;top:914px;height:18px;line-height:18px;">wrzesień</div>
<div class="t r" style="left:216.5px;width:100px;top:914px;height:18px;line-height:18px;">0,000</div>
<div class="t r" style="left:326.5px;width:100px;top:914px;height:18px;line-height:18px;">0,123</div>
<div class="t r" style="left:426.5px;width:100px;top:914px;height:18px;line-height:18px;">0,123</div>
<div style="left:39px;top:932px;width:1px;height:5px;background-image:linear-gradient(#a0a0a0 50%,transparent 50%);background-size:1px 2px;background-position:0 1px;"></div>
<div style="left:43px;top:941px;width:5px;height:1px;background-image:linear-gradient(90deg,#a0a0a0 50%,transparent 50%);background-size:2px 1px;background-position:0px 0;"></div>
<div class="bx" style="left:34px;top:937px;width:9px;height:9px;"><i style="left:1px;top:3px;width:5px;height:1px"></i><i style="left:3px;top:1px;width:1px;height:5px"></i></div>
<div class="t" style="left:55.5px;top:932px;height:18px;line-height:18px;">cały rok</div>
<div class="t r" style="left:216.5px;width:100px;top:932px;height:18px;line-height:18px;">-9941,240</div>
<div class="t r" style="left:326.5px;width:100px;top:932px;height:18px;line-height:18px;">37089,113</div>
<div class="t r" style="left:426.5px;width:100px;top:932px;height:18px;line-height:18px;">27147,873</div>
<div style="left:544px;top:122px;width:15px;height:824px;background:#f0f0f0;"></div>
<div style="left:559px;top:122px;width:1px;height:824px;background:#f0f0f0;"></div>
<div style="left:544px;top:122px;width:15px;height:17px;background:#dadada;"></div>
<svg class="i" style="left:547px;top:128px" width="9" height="6" viewBox="0 0 9 6"><path d="M1.2 4.8 L4.5 1.6 L7.8 4.8" stroke="#000" stroke-width="1.7" fill="none"/></svg>
<div style="left:544px;top:139px;width:15px;height:786px;background:#c1c1c1;"></div>
<svg class="i" style="left:547px;top:935px" width="9" height="6" viewBox="0 0 9 6"><path d="M1.2 1.2 L4.5 4.4 L7.8 1.2" stroke="#606060" stroke-width="1.7" fill="none"/></svg>
<div class="t" style="left:15.7px;top:956px;letter-spacing:-0.05px;">Data przeliczenia stanów magazynowych: 2015-12-03 08:47:56</div>
<div style="left:567px;top:162px;width:1092px;height:795px;background:#fff;"></div>
<div style="left:567px;top:162px;width:1092px;height:17px;background:linear-gradient(#fff 1px,#fcfcfc 1px);border-bottom:1px solid #e6eefa;"></div>
<div style="left:746px;top:162px;width:1px;height:16px;background:#e6eefa;"></div>
<div style="left:746px;top:179px;width:1px;height:558px;background-image:linear-gradient(#e2e2e2 50%,transparent 50%);background-size:1px 2px;background-position:0 1px;"></div>
<div style="left:886px;top:162px;width:1px;height:16px;background:#e6eefa;"></div>
<div style="left:886px;top:179px;width:1px;height:558px;background-image:linear-gradient(#e2e2e2 50%,transparent 50%);background-size:1px 2px;background-position:0 1px;"></div>
<div style="left:961px;top:162px;width:1px;height:16px;background:#e6eefa;"></div>
<div style="left:961px;top:179px;width:1px;height:558px;background-image:linear-gradient(#e2e2e2 50%,transparent 50%);background-size:1px 2px;background-position:0 1px;"></div>
<div style="left:1021px;top:162px;width:1px;height:16px;background:#e6eefa;"></div>
<div style="left:1021px;top:179px;width:1px;height:558px;background-image:linear-gradient(#e2e2e2 50%,transparent 50%);background-size:1px 2px;background-position:0 1px;"></div>
<div style="left:1131px;top:162px;width:1px;height:16px;background:#e6eefa;"></div>
<div style="left:1131px;top:179px;width:1px;height:558px;background-image:linear-gradient(#e2e2e2 50%,transparent 50%);background-size:1px 2px;background-position:0 1px;"></div>
<div style="left:1241px;top:162px;width:1px;height:16px;background:#e6eefa;"></div>
<div style="left:1241px;top:179px;width:1px;height:558px;background-image:linear-gradient(#e2e2e2 50%,transparent 50%);background-size:1px 2px;background-position:0 1px;"></div>
<div style="left:1341px;top:162px;width:1px;height:16px;background:#e6eefa;"></div>
<div style="left:1341px;top:179px;width:1px;height:558px;background-image:linear-gradient(#e2e2e2 50%,transparent 50%);background-size:1px 2px;background-position:0 1px;"></div>
<div style="left:1491px;top:162px;width:1px;height:16px;background:#e6eefa;"></div>
<div style="left:1491px;top:179px;width:1px;height:558px;background-image:linear-gradient(#e2e2e2 50%,transparent 50%);background-size:1px 2px;background-position:0 1px;"></div>
<div style="left:1581px;top:162px;width:1px;height:16px;background:#e6eefa;"></div>
<div style="left:1581px;top:179px;width:1px;height:558px;background-image:linear-gradient(#e2e2e2 50%,transparent 50%);background-size:1px 2px;background-position:0 1px;"></div>
<div class="t" style="left:572px;top:165px;">Data operacji</div>
<div class="t r" style="left:580px;top:165px;width:300px;">Typ operacji</div>
<div class="t r" style="left:655px;top:165px;width:300px;">Nr ważenia</div>
<div class="t r" style="left:715px;top:165px;width:300px;">Netto</div>
<div class="t r" style="left:825px;top:165px;width:300px;">Stan (wydania)</div>
<div class="t r" style="left:935px;top:165px;width:300px;">Stan (przyjęcia)</div>
<div class="t r" style="left:1035px;top:165px;width:300px;letter-spacing:-0.18px;">Stan ogółem</div>
<div class="t r" style="left:1185px;top:165px;width:300px;letter-spacing:-0.1px;">Użytkownik</div>
<div class="t" style="left:1497px;top:165px;">Nr rej.</div>
<div class="t" style="left:1587.5px;top:165px;width:71.5px;overflow:hidden;">Stanowisko wa</div>
<div style="left:1344px;top:179px;width:232px;height:558px;background:#fff;"></div>
<div style="left:568px;top:196px;width:1091px;height:1px;background-image:linear-gradient(90deg,#e6e6e6 50%,transparent 50%);background-size:2px 1px;"></div>
<svg class="i" style="left:592px;top:183px" width="9" height="9" viewBox="0 0 9 9"><use href="#ic-plus"/></svg>
<div class="t" style="left:611px;top:179px;height:18px;line-height:18px;">2015-01-31 09:44:46</div>
<div class="t r" style="left:741px;width:140px;top:179px;height:18px;line-height:18px;letter-spacing:-0.08px;">Przyjęcie zewnętrzne</div>
<div class="t r" style="left:816px;width:140px;top:179px;height:18px;line-height:18px;">1131/2015</div>
<div class="t r" style="left:876px;width:140px;top:179px;height:18px;line-height:18px;">0,440</div>
<div class="t r" style="left:986px;width:140px;top:179px;height:18px;line-height:18px;">-107,980</div>
<div class="t r" style="left:1096px;width:140px;top:179px;height:18px;line-height:18px;">16,550</div>
<div class="t r" style="left:1196px;width:140px;top:179px;height:18px;line-height:18px;">-91,430</div>
<div class="t" style="left:1590px;top:179px;height:18px;line-height:18px;">Waga 1</div>
<div class="fl" style="left:1344px;top:196px;width:232px;height:1px;"></div>
<div class="s1" style="left:1399px;top:183px;width:93px;height:11px;"></div>
<div class="s2" style="left:1484px;top:182px;width:77px;height:11px;"></div>
<div style="left:568px;top:214px;width:1091px;height:1px;background-image:linear-gradient(90deg,#e6e6e6 50%,transparent 50%);background-size:2px 1px;"></div>
<svg class="i" style="left:592px;top:201px" width="9" height="9" viewBox="0 0 9 9"><use href="#ic-plus"/></svg>
<div class="t" style="left:611px;top:197px;height:18px;line-height:18px;">2015-01-30 11:32:27</div>
<div class="t r" style="left:741px;width:140px;top:197px;height:18px;line-height:18px;letter-spacing:-0.08px;">Przyjęcie zewnętrzne</div>
<div class="t r" style="left:816px;width:140px;top:197px;height:18px;line-height:18px;">1084/2015</div>
<div class="t r" style="left:876px;width:140px;top:197px;height:18px;line-height:18px;">0,160</div>
<div class="t r" style="left:986px;width:140px;top:197px;height:18px;line-height:18px;">-107,980</div>
<div class="t r" style="left:1096px;width:140px;top:197px;height:18px;line-height:18px;">16,110</div>
<div class="t r" style="left:1196px;width:140px;top:197px;height:18px;line-height:18px;">-91,870</div>
<div class="t" style="left:1590px;top:197px;height:18px;line-height:18px;">Waga 1</div>
<div class="fl" style="left:1344px;top:214px;width:232px;height:1px;"></div>
<div class="s1" style="left:1407px;top:201px;width:85px;height:11px;"></div>
<div class="s2" style="left:1484px;top:200px;width:73px;height:11px;"></div>
<div style="left:568px;top:232px;width:1091px;height:1px;background-image:linear-gradient(90deg,#e6e6e6 50%,transparent 50%);background-size:2px 1px;"></div>
<svg class="i" style="left:592px;top:219px" width="9" height="9" viewBox="0 0 9 9"><use href="#ic-plus"/></svg>
<div class="t" style="left:611px;top:215px;height:18px;line-height:18px;">2015-01-30 10:38:44</div>
<div class="t r" style="left:741px;width:140px;top:215px;height:18px;line-height:18px;letter-spacing:-0.08px;">Przyjęcie zewnętrzne</div>
<div class="t r" style="left:816px;width:140px;top:215px;height:18px;line-height:18px;">1074/2015</div>
<div class="t r" style="left:876px;width:140px;top:215px;height:18px;line-height:18px;">0,360</div>
<div class="t r" style="left:986px;width:140px;top:215px;height:18px;line-height:18px;">-107,980</div>
<div class="t r" style="left:1096px;width:140px;top:215px;height:18px;line-height:18px;">15,950</div>
<div class="t r" style="left:1196px;width:140px;top:215px;height:18px;line-height:18px;">-92,030</div>
<div class="t" style="left:1590px;top:215px;height:18px;line-height:18px;">Waga 1</div>
<div class="fl" style="left:1344px;top:232px;width:232px;height:1px;"></div>
<div class="s1" style="left:1407px;top:219px;width:85px;height:11px;"></div>
<div class="s2" style="left:1484px;top:218px;width:73px;height:11px;"></div>
<div style="left:568px;top:250px;width:1091px;height:1px;background-image:linear-gradient(90deg,#e6e6e6 50%,transparent 50%);background-size:2px 1px;"></div>
<svg class="i" style="left:592px;top:237px" width="9" height="9" viewBox="0 0 9 9"><use href="#ic-plus"/></svg>
<div class="t" style="left:611px;top:233px;height:18px;line-height:18px;">2015-01-27 15:21:06</div>
<div class="t r" style="left:741px;width:140px;top:233px;height:18px;line-height:18px;letter-spacing:-0.08px;">Przyjęcie zewnętrzne</div>
<div class="t r" style="left:816px;width:140px;top:233px;height:18px;line-height:18px;">942-2/2015</div>
<div class="t r" style="left:876px;width:140px;top:233px;height:18px;line-height:18px;">0,210</div>
<div class="t r" style="left:986px;width:140px;top:233px;height:18px;line-height:18px;">-107,980</div>
<div class="t r" style="left:1096px;width:140px;top:233px;height:18px;line-height:18px;">15,590</div>
<div class="t r" style="left:1196px;width:140px;top:233px;height:18px;line-height:18px;">-92,390</div>
<div class="t" style="left:1590px;top:233px;height:18px;line-height:18px;">Waga 1</div>
<div class="fl" style="left:1344px;top:250px;width:232px;height:1px;"></div>
<div class="s1" style="left:1399px;top:237px;width:93px;height:11px;"></div>
<div class="s2" style="left:1484px;top:236px;width:70px;height:11px;"></div>
<div style="left:568px;top:268px;width:1091px;height:1px;background-image:linear-gradient(90deg,#e6e6e6 50%,transparent 50%);background-size:2px 1px;"></div>
<svg class="i" style="left:592px;top:255px" width="9" height="9" viewBox="0 0 9 9"><use href="#ic-plus"/></svg>
<div class="t" style="left:611px;top:251px;height:18px;line-height:18px;">2015-01-27 13:19:39</div>
<div class="t r" style="left:741px;width:140px;top:251px;height:18px;line-height:18px;letter-spacing:-0.08px;">Przyjęcie zewnętrzne</div>
<div class="t r" style="left:816px;width:140px;top:251px;height:18px;line-height:18px;">935-2/2015</div>
<div class="t r" style="left:876px;width:140px;top:251px;height:18px;line-height:18px;">0,130</div>
<div class="t r" style="left:986px;width:140px;top:251px;height:18px;line-height:18px;">-107,980</div>
<div class="t r" style="left:1096px;width:140px;top:251px;height:18px;line-height:18px;">15,380</div>
<div class="t r" style="left:1196px;width:140px;top:251px;height:18px;line-height:18px;">-92,600</div>
<div class="t" style="left:1590px;top:251px;height:18px;line-height:18px;">Waga 1</div>
<div class="fl" style="left:1344px;top:268px;width:232px;height:1px;"></div>
<div class="s1" style="left:1407px;top:255px;width:85px;height:11px;"></div>
<div class="s2" style="left:1484px;top:254px;width:70px;height:11px;"></div>
<div style="left:568px;top:286px;width:1091px;height:1px;background-image:linear-gradient(90deg,#e6e6e6 50%,transparent 50%);background-size:2px 1px;"></div>
<svg class="i" style="left:592px;top:273px" width="9" height="9" viewBox="0 0 9 9"><use href="#ic-plus"/></svg>
<div class="t" style="left:611px;top:269px;height:18px;line-height:18px;">2015-01-27 10:32:56</div>
<div class="t r" style="left:741px;width:140px;top:269px;height:18px;line-height:18px;letter-spacing:-0.08px;">Przyjęcie zewnętrzne</div>
<div class="t r" style="left:816px;width:140px;top:269px;height:18px;line-height:18px;">908-2/2015</div>
<div class="t r" style="left:876px;width:140px;top:269px;height:18px;line-height:18px;">0,160</div>
<div class="t r" style="left:986px;width:140px;top:269px;height:18px;line-height:18px;">-107,980</div>
<div class="t r" style="left:1096px;width:140px;top:269px;height:18px;line-height:18px;">15,250</div>
<div class="t r" style="left:1196px;width:140px;top:269px;height:18px;line-height:18px;">-92,730</div>
<div class="t" style="left:1590px;top:269px;height:18px;line-height:18px;">Waga 1</div>
<div class="fl" style="left:1344px;top:286px;width:232px;height:1px;"></div>
<div class="s1" style="left:1407px;top:273px;width:85px;height:11px;"></div>
<div class="s2" style="left:1484px;top:272px;width:70px;height:11px;"></div>
<div style="left:568px;top:304px;width:1091px;height:1px;background-image:linear-gradient(90deg,#e6e6e6 50%,transparent 50%);background-size:2px 1px;"></div>
<svg class="i" style="left:592px;top:291px" width="9" height="9" viewBox="0 0 9 9"><use href="#ic-plus"/></svg>
<div class="t" style="left:611px;top:287px;height:18px;line-height:18px;">2015-01-26 14:26:40</div>
<div class="t r" style="left:741px;width:140px;top:287px;height:18px;line-height:18px;letter-spacing:-0.08px;">Przyjęcie zewnętrzne</div>
<div class="t r" style="left:816px;width:140px;top:287px;height:18px;line-height:18px;">868-2/2015</div>
<div class="t r" style="left:876px;width:140px;top:287px;height:18px;line-height:18px;">0,230</div>
<div class="t r" style="left:986px;width:140px;top:287px;height:18px;line-height:18px;">-107,980</div>
<div class="t r" style="left:1096px;width:140px;top:287px;height:18px;line-height:18px;">15,090</div>
<div class="t r" style="left:1196px;width:140px;top:287px;height:18px;line-height:18px;">-92,890</div>
<div class="t" style="left:1590px;top:287px;height:18px;line-height:18px;">Waga 1</div>
<div class="fl" style="left:1344px;top:304px;width:232px;height:1px;"></div>
<div class="s1" style="left:1370px;top:291px;width:122px;height:11px;"></div>
<div class="s2" style="left:1484px;top:290px;width:70px;height:11px;"></div>
<div style="left:568px;top:322px;width:1091px;height:1px;background-image:linear-gradient(90deg,#e6e6e6 50%,transparent 50%);background-size:2px 1px;"></div>
<svg class="i" style="left:592px;top:309px" width="9" height="9" viewBox="0 0 9 9"><use href="#ic-plus"/></svg>
<div class="t" style="left:611px;top:305px;height:18px;line-height:18px;">2015-01-26 12:44:27</div>
<div class="t r" style="left:741px;width:140px;top:305px;height:18px;line-height:18px;letter-spacing:-0.08px;">Przyjęcie zewnętrzne</div>
<div class="t r" style="left:816px;width:140px;top:305px;height:18px;line-height:18px;">853/2015</div>
<div class="t r" style="left:876px;width:140px;top:305px;height:18px;line-height:18px;">0,420</div>
<div class="t r" style="left:986px;width:140px;top:305px;height:18px;line-height:18px;">-107,980</div>
<div class="t r" style="left:1096px;width:140px;top:305px;height:18px;line-height:18px;">14,860</div>
<div class="t r" style="left:1196px;width:140px;top:305px;height:18px;line-height:18px;">-93,120</div>
<div class="t" style="left:1590px;top:305px;height:18px;line-height:18px;">Waga 1</div>
<div class="fl" style="left:1344px;top:322px;width:232px;height:1px;"></div>
<div class="s1" style="left:1370px;top:309px;width:122px;height:11px;"></div>
<div class="s2" style="left:1484px;top:308px;width:77px;height:11px;"></div>
<div style="left:568px;top:340px;width:1091px;height:1px;background-image:linear-gradient(90deg,#e6e6e6 50%,transparent 50%);background-size:2px 1px;"></div>
<svg class="i" style="left:592px;top:327px" width="9" height="9" viewBox="0 0 9 9"><use href="#ic-plus"/></svg>
<div class="t" style="left:611px;top:323px;height:18px;line-height:18px;">2015-01-23 15:48:38</div>
<div class="t r" style="left:741px;width:140px;top:323px;height:18px;line-height:18px;letter-spacing:-0.08px;">Przyjęcie zewnętrzne</div>
<div class="t r" style="left:816px;width:140px;top:323px;height:18px;line-height:18px;">803/2015</div>
<div class="t r" style="left:876px;width:140px;top:323px;height:18px;line-height:18px;">0,300</div>
<div class="t r" style="left:986px;width:140px;top:323px;height:18px;line-height:18px;">-107,980</div>
<div class="t r" style="left:1096px;width:140px;top:323px;height:18px;line-height:18px;">14,440</div>
<div class="t r" style="left:1196px;width:140px;top:323px;height:18px;line-height:18px;">-93,540</div>
<div class="t" style="left:1590px;top:323px;height:18px;line-height:18px;">Waga 1</div>
<div class="fl" style="left:1344px;top:340px;width:232px;height:1px;"></div>
<div class="s1" style="left:1407px;top:327px;width:85px;height:11px;"></div>
<div class="s2" style="left:1484px;top:326px;width:73px;height:11px;"></div>
<div style="left:568px;top:358px;width:1091px;height:1px;background-image:linear-gradient(90deg,#e6e6e6 50%,transparent 50%);background-size:2px 1px;"></div>
<svg class="i" style="left:592px;top:345px" width="9" height="9" viewBox="0 0 9 9"><use href="#ic-plus"/></svg>
<div class="t" style="left:611px;top:341px;height:18px;line-height:18px;">2015-01-23 14:26:30</div>
<div class="t r" style="left:741px;width:140px;top:341px;height:18px;line-height:18px;letter-spacing:-0.08px;">Przyjęcie zewnętrzne</div>
<div class="t r" style="left:816px;width:140px;top:341px;height:18px;line-height:18px;">801/2015</div>
<div class="t r" style="left:876px;width:140px;top:341px;height:18px;line-height:18px;">0,440</div>
<div class="t r" style="left:986px;width:140px;top:341px;height:18px;line-height:18px;">-107,980</div>
<div class="t r" style="left:1096px;width:140px;top:341px;height:18px;line-height:18px;">14,140</div>
<div class="t r" style="left:1196px;width:140px;top:341px;height:18px;line-height:18px;">-93,840</div>
<div class="t" style="left:1590px;top:341px;height:18px;line-height:18px;">Waga 1</div>
<div class="fl" style="left:1344px;top:358px;width:232px;height:1px;"></div>
<div class="s1" style="left:1370px;top:345px;width:122px;height:11px;"></div>
<div class="s2" style="left:1484px;top:344px;width:73px;height:11px;"></div>
<div style="left:568px;top:376px;width:1091px;height:1px;background-image:linear-gradient(90deg,#e6e6e6 50%,transparent 50%);background-size:2px 1px;"></div>
<svg class="i" style="left:592px;top:363px" width="9" height="9" viewBox="0 0 9 9"><use href="#ic-plus"/></svg>
<div class="t" style="left:611px;top:359px;height:18px;line-height:18px;">2015-01-23 12:09:01</div>
<div class="t r" style="left:741px;width:140px;top:359px;height:18px;line-height:18px;letter-spacing:-0.08px;">Przyjęcie zewnętrzne</div>
<div class="t r" style="left:816px;width:140px;top:359px;height:18px;line-height:18px;">789/2015</div>
<div class="t r" style="left:876px;width:140px;top:359px;height:18px;line-height:18px;">0,340</div>
<div class="t r" style="left:986px;width:140px;top:359px;height:18px;line-height:18px;">-107,980</div>
<div class="t r" style="left:1096px;width:140px;top:359px;height:18px;line-height:18px;">13,700</div>
<div class="t r" style="left:1196px;width:140px;top:359px;height:18px;line-height:18px;">-94,280</div>
<div class="t" style="left:1590px;top:359px;height:18px;line-height:18px;">Waga 1</div>
<div class="fl" style="left:1344px;top:376px;width:232px;height:1px;"></div>
<div class="s1" style="left:1399px;top:363px;width:93px;height:11px;"></div>
<div class="s2" style="left:1484px;top:362px;width:73px;height:11px;"></div>
<div style="left:568px;top:394px;width:1091px;height:1px;background-image:linear-gradient(90deg,#e6e6e6 50%,transparent 50%);background-size:2px 1px;"></div>
<svg class="i" style="left:592px;top:384px" width="10" height="4" viewBox="0 0 10 4"><use href="#ic-minus"/></svg>
<div class="t" style="left:611px;top:377px;height:18px;line-height:18px;">2015-01-22 11:50:18</div>
<div class="t r" style="left:741px;width:140px;top:377px;height:18px;line-height:18px;letter-spacing:-0.08px;">Wydanie zewnętrzne</div>
<div class="t r" style="left:816px;width:140px;top:377px;height:18px;line-height:18px;">730/2015</div>
<div class="t r" style="left:876px;width:140px;top:377px;height:18px;line-height:18px;">-16,840</div>
<div class="t r" style="left:986px;width:140px;top:377px;height:18px;line-height:18px;">-107,980</div>
<div class="t r" style="left:1096px;width:140px;top:377px;height:18px;line-height:18px;">13,360</div>
<div class="t r" style="left:1196px;width:140px;top:377px;height:18px;line-height:18px;">-94,620</div>
<div class="t" style="left:1590px;top:377px;height:18px;line-height:18px;">Waga 1</div>
<div class="fl" style="left:1344px;top:394px;width:232px;height:1px;"></div>
<div class="s1" style="left:1374px;top:381px;width:118px;height:11px;"></div>
<div class="s2" style="left:1484px;top:380px;width:73px;height:11px;"></div>
<div style="left:568px;top:412px;width:1091px;height:1px;background-image:linear-gradient(90deg,#e6e6e6 50%,transparent 50%);background-size:2px 1px;"></div>
<svg class="i" style="left:592px;top:399px" width="9" height="9" viewBox="0 0 9 9"><use href="#ic-plus"/></svg>
<div class="t" style="left:611px;top:395px;height:18px;line-height:18px;">2015-01-21 15:03:31</div>
<div class="t r" style="left:741px;width:140px;top:395px;height:18px;line-height:18px;letter-spacing:-0.08px;">Przyjęcie zewnętrzne</div>
<div class="t r" style="left:816px;width:140px;top:395px;height:18px;line-height:18px;">709-2/2015</div>
<div class="t r" style="left:876px;width:140px;top:395px;height:18px;line-height:18px;">0,180</div>
<div class="t r" style="left:986px;width:140px;top:395px;height:18px;line-height:18px;">-91,140</div>
<div class="t r" style="left:1096px;width:140px;top:395px;height:18px;line-height:18px;">13,360</div>
<div class="t r" style="left:1196px;width:140px;top:395px;height:18px;line-height:18px;">-77,780</div>
<div class="t" style="left:1590px;top:395px;height:18px;line-height:18px;">Waga 1</div>
<div class="fl" style="left:1344px;top:412px;width:232px;height:1px;"></div>
<div class="s1" style="left:1407px;top:399px;width:85px;height:11px;"></div>
<div class="s2" style="left:1484px;top:398px;width:73px;height:11px;"></div>
<div style="left:568px;top:430px;width:1091px;height:1px;background-image:linear-gradient(90deg,#e6e6e6 50%,transparent 50%);background-size:2px 1px;"></div>
<svg class="i" style="left:592px;top:417px" width="9" height="9" viewBox="0 0 9 9"><use href="#ic-plus"/></svg>
<div class="t" style="left:611px;top:413px;height:18px;line-height:18px;">2015-01-21 11:03:11</div>
<div class="t r" style="left:741px;width:140px;top:413px;height:18px;line-height:18px;letter-spacing:-0.08px;">Przyjęcie zewnętrzne</div>
<div class="t r" style="left:816px;width:140px;top:413px;height:18px;line-height:18px;">688-3/2015</div>
<div class="t r" style="left:876px;width:140px;top:413px;height:18px;line-height:18px;">0,190</div>
<div class="t r" style="left:986px;width:140px;top:413px;height:18px;line-height:18px;">-91,140</div>
<div class="t r" style="left:1096px;width:140px;top:413px;height:18px;line-height:18px;">13,180</div>
<div class="t r" style="left:1196px;width:140px;top:413px;height:18px;line-height:18px;">-77,960</div>
<div class="t" style="left:1590px;top:413px;height:18px;line-height:18px;">Waga 1</div>
<div class="fl" style="left:1344px;top:430px;width:232px;height:1px;"></div>
<div class="s1" style="left:1375px;top:417px;width:117px;height:11px;"></div>
<div class="s2" style="left:1484px;top:416px;width:73px;height:11px;"></div>
<div style="left:568px;top:448px;width:1091px;height:1px;background-image:linear-gradient(90deg,#e6e6e6 50%,transparent 50%);background-size:2px 1px;"></div>
<svg class="i" style="left:592px;top:435px" width="9" height="9" viewBox="0 0 9 9"><use href="#ic-plus"/></svg>
<div class="t" style="left:611px;top:431px;height:18px;line-height:18px;">2015-01-21 09:25:36</div>
<div class="t r" style="left:741px;width:140px;top:431px;height:18px;line-height:18px;letter-spacing:-0.08px;">Przyjęcie zewnętrzne</div>
<div class="t r" style="left:816px;width:140px;top:431px;height:18px;line-height:18px;">672/2015</div>
<div class="t r" style="left:876px;width:140px;top:431px;height:18px;line-height:18px;">1,000</div>
<div class="t r" style="left:986px;width:140px;top:431px;height:18px;line-height:18px;">-91,140</div>
<div class="t r" style="left:1096px;width:140px;top:431px;height:18px;line-height:18px;">12,990</div>
<div class="t r" style="left:1196px;width:140px;top:431px;height:18px;line-height:18px;">-78,150</div>
<div class="t" style="left:1590px;top:431px;height:18px;line-height:18px;">Waga 1</div>
<div class="fl" style="left:1344px;top:448px;width:232px;height:1px;"></div>
<div class="s1" style="left:1375px;top:435px;width:117px;height:11px;"></div>
<div class="s2" style="left:1484px;top:434px;width:78px;height:11px;"></div>
<div style="left:568px;top:466px;width:1091px;height:1px;background-image:linear-gradient(90deg,#e6e6e6 50%,transparent 50%);background-size:2px 1px;"></div>
<svg class="i" style="left:592px;top:456px" width="10" height="4" viewBox="0 0 10 4"><use href="#ic-minus"/></svg>
<div class="t" style="left:611px;top:449px;height:18px;line-height:18px;">2015-01-20 10:46:05</div>
<div class="t r" style="left:741px;width:140px;top:449px;height:18px;line-height:18px;letter-spacing:-0.08px;">Wydanie zewnętrzne</div>
<div class="t r" style="left:816px;width:140px;top:449px;height:18px;line-height:18px;">616/2015</div>
<div class="t r" style="left:876px;width:140px;top:449px;height:18px;line-height:18px;">-23,580</div>
<div class="t r" style="left:986px;width:140px;top:449px;height:18px;line-height:18px;">-91,140</div>
<div class="t r" style="left:1096px;width:140px;top:449px;height:18px;line-height:18px;">11,990</div>
<div class="t r" style="left:1196px;width:140px;top:449px;height:18px;line-height:18px;">-79,150</div>
<div class="t" style="left:1590px;top:449px;height:18px;line-height:18px;">Waga 1</div>
<div class="fl" style="left:1344px;top:466px;width:232px;height:1px;"></div>
<div class="s1" style="left:1400px;top:453px;width:92px;height:11px;"></div>
<div class="s2" style="left:1484px;top:452px;width:71px;height:11px;"></div>
<div style="left:568px;top:484px;width:1091px;height:1px;background-image:linear-gradient(90deg,#e6e6e6 50%,transparent 50%);background-size:2px 1px;"></div>
<svg class="i" style="left:592px;top:474px" width="10" height="4" viewBox="0 0 10 4"><use href="#ic-minus"/></svg>
<div class="t" style="left:611px;top:467px;height:18px;line-height:18px;">2015-01-19 08:40:26</div>
<div class="t r" style="left:741px;width:140px;top:467px;height:18px;line-height:18px;letter-spacing:-0.08px;">Wydanie zewnętrzne</div>
<div class="t r" style="left:816px;width:140px;top:467px;height:18px;line-height:18px;">558/2015</div>
<div class="t r" style="left:876px;width:140px;top:467px;height:18px;line-height:18px;">-17,660</div>
<div class="t r" style="left:986px;width:140px;top:467px;height:18px;line-height:18px;">-67,560</div>
<div class="t r" style="left:1096px;width:140px;top:467px;height:18px;line-height:18px;">11,990</div>
<div class="t r" style="left:1196px;width:140px;top:467px;height:18px;line-height:18px;">-55,570</div>
<div class="t" style="left:1590px;top:467px;height:18px;line-height:18px;">Waga 1</div>
<div class="fl" style="left:1344px;top:484px;width:232px;height:1px;"></div>
<div class="s1" style="left:1400px;top:471px;width:92px;height:11px;"></div>
<div class="s2" style="left:1484px;top:470px;width:71px;height:11px;"></div>
<div style="left:568px;top:502px;width:1091px;height:1px;background-image:linear-gradient(90deg,#e6e6e6 50%,transparent 50%);background-size:2px 1px;"></div>
<svg class="i" style="left:592px;top:489px" width="9" height="9" viewBox="0 0 9 9"><use href="#ic-plus"/></svg>
<div class="t" style="left:611px;top:485px;height:18px;line-height:18px;">2015-01-14 12:52:46</div>
<div class="t r" style="left:741px;width:140px;top:485px;height:18px;line-height:18px;letter-spacing:-0.08px;">Przyjęcie zewnętrzne</div>
<div class="t r" style="left:816px;width:140px;top:485px;height:18px;line-height:18px;">408/2015</div>
<div class="t r" style="left:876px;width:140px;top:485px;height:18px;line-height:18px;">0,480</div>
<div class="t r" style="left:986px;width:140px;top:485px;height:18px;line-height:18px;">-49,900</div>
<div class="t r" style="left:1096px;width:140px;top:485px;height:18px;line-height:18px;">11,990</div>
<div class="t r" style="left:1196px;width:140px;top:485px;height:18px;line-height:18px;">-37,910</div>
<div class="t" style="left:1590px;top:485px;height:18px;line-height:18px;">Waga 1</div>
<div class="fl" style="left:1344px;top:502px;width:232px;height:1px;"></div>
<div class="s1" style="left:1407px;top:489px;width:85px;height:11px;"></div>
<div class="s2" style="left:1484px;top:488px;width:73px;height:11px;"></div>
<div style="left:568px;top:520px;width:1091px;height:1px;background-image:linear-gradient(90deg,#e6e6e6 50%,transparent 50%);background-size:2px 1px;"></div>
<svg class="i" style="left:592px;top:507px" width="9" height="9" viewBox="0 0 9 9"><use href="#ic-plus"/></svg>
<div class="t" style="left:611px;top:503px;height:18px;line-height:18px;">2015-01-13 12:52:52</div>
<div class="t r" style="left:741px;width:140px;top:503px;height:18px;line-height:18px;letter-spacing:-0.08px;">Przyjęcie zewnętrzne</div>
<div class="t r" style="left:816px;width:140px;top:503px;height:18px;line-height:18px;">359-2/2015</div>
<div class="t r" style="left:876px;width:140px;top:503px;height:18px;line-height:18px;">0,170</div>
<div class="t r" style="left:986px;width:140px;top:503px;height:18px;line-height:18px;">-49,900</div>
<div class="t r" style="left:1096px;width:140px;top:503px;height:18px;line-height:18px;">11,510</div>
<div class="t r" style="left:1196px;width:140px;top:503px;height:18px;line-height:18px;">-38,390</div>
<div class="t" style="left:1590px;top:503px;height:18px;line-height:18px;">Waga 1</div>
<div class="fl" style="left:1344px;top:520px;width:232px;height:1px;"></div>
<div class="s1" style="left:1407px;top:507px;width:85px;height:11px;"></div>
<div class="s2" style="left:1484px;top:506px;width:73px;height:11px;"></div>
<div style="left:568px;top:538px;width:1091px;height:1px;background-image:linear-gradient(90deg,#e6e6e6 50%,transparent 50%);background-size:2px 1px;"></div>
<svg class="i" style="left:592px;top:525px" width="9" height="9" viewBox="0 0 9 9"><use href="#ic-plus"/></svg>
<div class="t" style="left:611px;top:521px;height:18px;line-height:18px;">2015-01-13 11:17:07</div>
<div class="t r" style="left:741px;width:140px;top:521px;height:18px;line-height:18px;letter-spacing:-0.08px;">Przyjęcie zewnętrzne</div>
<div class="t r" style="left:816px;width:140px;top:521px;height:18px;line-height:18px;">353-2/2015</div>
<div class="t r" style="left:876px;width:140px;top:521px;height:18px;line-height:18px;">0,670</div>
<div class="t r" style="left:986px;width:140px;top:521px;height:18px;line-height:18px;">-49,900</div>
<div class="t r" style="left:1096px;width:140px;top:521px;height:18px;line-height:18px;">11,340</div>
<div class="t r" style="left:1196px;width:140px;top:521px;height:18px;line-height:18px;">-38,560</div>
<div class="t" style="left:1590px;top:521px;height:18px;line-height:18px;">Waga 1</div>
<div class="fl" style="left:1344px;top:538px;width:232px;height:1px;"></div>
<div class="s1" style="left:1407px;top:525px;width:85px;height:11px;"></div>
<div class="s2" style="left:1484px;top:524px;width:73px;height:11px;"></div>
<div style="left:568px;top:556px;width:1091px;height:1px;background-image:linear-gradient(90deg,#e6e6e6 50%,transparent 50%);background-size:2px 1px;"></div>
<svg class="i" style="left:592px;top:543px" width="9" height="9" viewBox="0 0 9 9"><use href="#ic-plus"/></svg>
<div class="t" style="left:611px;top:539px;height:18px;line-height:18px;">2015-01-13 10:41:01</div>
<div class="t r" style="left:741px;width:140px;top:539px;height:18px;line-height:18px;letter-spacing:-0.08px;">Przyjęcie zewnętrzne</div>
<div class="t r" style="left:816px;width:140px;top:539px;height:18px;line-height:18px;">348-2/2015</div>
<div class="t r" style="left:876px;width:140px;top:539px;height:18px;line-height:18px;">0,240</div>
<div class="t r" style="left:986px;width:140px;top:539px;height:18px;line-height:18px;">-49,900</div>
<div class="t r" style="left:1096px;width:140px;top:539px;height:18px;line-height:18px;">10,670</div>
<div class="t r" style="left:1196px;width:140px;top:539px;height:18px;line-height:18px;">-39,230</div>
<div class="t" style="left:1590px;top:539px;height:18px;line-height:18px;">Waga 1</div>
<div class="fl" style="left:1344px;top:556px;width:232px;height:1px;"></div>
<div class="s1" style="left:1407px;top:543px;width:85px;height:11px;"></div>
<div class="s2" style="left:1484px;top:542px;width:73px;height:11px;"></div>
<div style="left:568px;top:574px;width:1091px;height:1px;background-image:linear-gradient(90deg,#e6e6e6 50%,transparent 50%);background-size:2px 1px;"></div>
<svg class="i" style="left:592px;top:561px" width="9" height="9" viewBox="0 0 9 9"><use href="#ic-plus"/></svg>
<div class="t" style="left:611px;top:557px;height:18px;line-height:18px;">2015-01-12 14:40:51</div>
<div class="t r" style="left:741px;width:140px;top:557px;height:18px;line-height:18px;letter-spacing:-0.08px;">Przyjęcie zewnętrzne</div>
<div class="t r" style="left:816px;width:140px;top:557px;height:18px;line-height:18px;">315/2015</div>
<div class="t r" style="left:876px;width:140px;top:557px;height:18px;line-height:18px;">0,590</div>
<div class="t r" style="left:986px;width:140px;top:557px;height:18px;line-height:18px;">-49,900</div>
<div class="t r" style="left:1096px;width:140px;top:557px;height:18px;line-height:18px;">10,430</div>
<div class="t r" style="left:1196px;width:140px;top:557px;height:18px;line-height:18px;">-39,470</div>
<div class="t" style="left:1590px;top:557px;height:18px;line-height:18px;">Waga 1</div>
<div class="fl" style="left:1344px;top:574px;width:232px;height:1px;"></div>
<div class="s1" style="left:1400px;top:561px;width:92px;height:11px;"></div>
<div class="s2" style="left:1484px;top:560px;width:73px;height:11px;"></div>
<div style="left:568px;top:592px;width:1091px;height:1px;background-image:linear-gradient(90deg,#e6e6e6 50%,transparent 50%);background-size:2px 1px;"></div>
<svg class="i" style="left:592px;top:579px" width="9" height="9" viewBox="0 0 9 9"><use href="#ic-plus"/></svg>
<div class="t" style="left:611px;top:575px;height:18px;line-height:18px;">2015-01-12 13:54:01</div>
<div class="t r" style="left:741px;width:140px;top:575px;height:18px;line-height:18px;letter-spacing:-0.08px;">Przyjęcie zewnętrzne</div>
<div class="t r" style="left:816px;width:140px;top:575px;height:18px;line-height:18px;">312-2/2015</div>
<div class="t r" style="left:876px;width:140px;top:575px;height:18px;line-height:18px;">0,090</div>
<div class="t r" style="left:986px;width:140px;top:575px;height:18px;line-height:18px;">-49,900</div>
<div class="t r" style="left:1096px;width:140px;top:575px;height:18px;line-height:18px;">9,840</div>
<div class="t r" style="left:1196px;width:140px;top:575px;height:18px;line-height:18px;">-40,060</div>
<div class="t" style="left:1590px;top:575px;height:18px;line-height:18px;">Waga 1</div>
<div class="fl" style="left:1344px;top:592px;width:232px;height:1px;"></div>
<div class="s1" style="left:1407px;top:579px;width:85px;height:11px;"></div>
<div class="s2" style="left:1484px;top:578px;width:73px;height:11px;"></div>
<div style="left:568px;top:610px;width:1091px;height:1px;background-image:linear-gradient(90deg,#e6e6e6 50%,transparent 50%);background-size:2px 1px;"></div>
<svg class="i" style="left:592px;top:597px" width="9" height="9" viewBox="0 0 9 9"><use href="#ic-plus"/></svg>
<div class="t" style="left:611px;top:593px;height:18px;line-height:18px;">2015-01-12 12:22:50</div>
<div class="t r" style="left:741px;width:140px;top:593px;height:18px;line-height:18px;letter-spacing:-0.08px;">Przyjęcie zewnętrzne</div>
<div class="t r" style="left:816px;width:140px;top:593px;height:18px;line-height:18px;">306-3/2015</div>
<div class="t r" style="left:876px;width:140px;top:593px;height:18px;line-height:18px;">0,170</div>
<div class="t r" style="left:986px;width:140px;top:593px;height:18px;line-height:18px;">-49,900</div>
<div class="t r" style="left:1096px;width:140px;top:593px;height:18px;line-height:18px;">9,750</div>
<div class="t r" style="left:1196px;width:140px;top:593px;height:18px;line-height:18px;">-40,150</div>
<div class="t" style="left:1590px;top:593px;height:18px;line-height:18px;">Waga 1</div>
<div class="fl" style="left:1344px;top:610px;width:232px;height:1px;"></div>
<div class="s1" style="left:1407px;top:597px;width:85px;height:11px;"></div>
<div class="s2" style="left:1484px;top:596px;width:73px;height:11px;"></div>
<div style="left:568px;top:628px;width:1091px;height:1px;background-image:linear-gradient(90deg,#e6e6e6 50%,transparent 50%);background-size:2px 1px;"></div>
<svg class="i" style="left:592px;top:615px" width="9" height="9" viewBox="0 0 9 9"><use href="#ic-plus"/></svg>
<div class="t" style="left:611px;top:611px;height:18px;line-height:18px;">2015-01-12 09:26:33</div>
<div class="t r" style="left:741px;width:140px;top:611px;height:18px;line-height:18px;letter-spacing:-0.08px;">Przyjęcie zewnętrzne</div>
<div class="t r" style="left:816px;width:140px;top:611px;height:18px;line-height:18px;">288/2015</div>
<div class="t r" style="left:876px;width:140px;top:611px;height:18px;line-height:18px;">0,400</div>
<div class="t r" style="left:986px;width:140px;top:611px;height:18px;line-height:18px;">-49,900</div>
<div class="t r" style="left:1096px;width:140px;top:611px;height:18px;line-height:18px;">9,580</div>
<div class="t r" style="left:1196px;width:140px;top:611px;height:18px;line-height:18px;">-40,320</div>
<div class="t" style="left:1590px;top:611px;height:18px;line-height:18px;">Waga 1</div>
<div class="fl" style="left:1344px;top:628px;width:232px;height:1px;"></div>
<div class="s1" style="left:1407px;top:615px;width:85px;height:11px;"></div>
<div class="s2" style="left:1484px;top:614px;width:78px;height:11px;"></div>
<div style="left:568px;top:646px;width:1091px;height:1px;background-image:linear-gradient(90deg,#e6e6e6 50%,transparent 50%);background-size:2px 1px;"></div>
<svg class="i" style="left:592px;top:633px" width="9" height="9" viewBox="0 0 9 9"><use href="#ic-plus"/></svg>
<div class="t" style="left:611px;top:629px;height:18px;line-height:18px;">2015-01-08 16:27:06</div>
<div class="t r" style="left:741px;width:140px;top:629px;height:18px;line-height:18px;letter-spacing:-0.08px;">Przyjęcie zewnętrzne</div>
<div class="t r" style="left:816px;width:140px;top:629px;height:18px;line-height:18px;">198/2015</div>
<div class="t r" style="left:876px;width:140px;top:629px;height:18px;line-height:18px;">0,920</div>
<div class="t r" style="left:986px;width:140px;top:629px;height:18px;line-height:18px;">-49,900</div>
<div class="t r" style="left:1096px;width:140px;top:629px;height:18px;line-height:18px;">9,180</div>
<div class="t r" style="left:1196px;width:140px;top:629px;height:18px;line-height:18px;">-40,720</div>
<div class="t" style="left:1590px;top:629px;height:18px;line-height:18px;">Waga 1</div>
<div class="fl" style="left:1344px;top:646px;width:232px;height:1px;"></div>
<div class="s1" style="left:1407px;top:633px;width:85px;height:11px;"></div>
<div class="s2" style="left:1484px;top:632px;width:78px;height:11px;"></div>
<div style="left:568px;top:664px;width:1091px;height:1px;background-image:linear-gradient(90deg,#e6e6e6 50%,transparent 50%);background-size:2px 1px;"></div>
<svg class="i" style="left:592px;top:651px" width="9" height="9" viewBox="0 0 9 9"><use href="#ic-plus"/></svg>
<div class="t" style="left:611px;top:647px;height:18px;line-height:18px;">2015-01-07 14:36:29</div>
<div class="t r" style="left:741px;width:140px;top:647px;height:18px;line-height:18px;letter-spacing:-0.08px;">Przyjęcie zewnętrzne</div>
<div class="t r" style="left:816px;width:140px;top:647px;height:18px;line-height:18px;">147-2/2015</div>
<div class="t r" style="left:876px;width:140px;top:647px;height:18px;line-height:18px;">0,120</div>
<div class="t r" style="left:986px;width:140px;top:647px;height:18px;line-height:18px;">-49,900</div>
<div class="t r" style="left:1096px;width:140px;top:647px;height:18px;line-height:18px;">8,260</div>
<div class="t r" style="left:1196px;width:140px;top:647px;height:18px;line-height:18px;">-41,640</div>
<div class="t" style="left:1590px;top:647px;height:18px;line-height:18px;">Waga 1</div>
<div class="fl" style="left:1344px;top:664px;width:232px;height:1px;"></div>
<div class="s1" style="left:1400px;top:651px;width:92px;height:11px;"></div>
<div class="s2" style="left:1484px;top:650px;width:73px;height:11px;"></div>
<div style="left:568px;top:682px;width:1091px;height:1px;background-image:linear-gradient(90deg,#e6e6e6 50%,transparent 50%);background-size:2px 1px;"></div>
<svg class="i" style="left:592px;top:669px" width="9" height="9" viewBox="0 0 9 9"><use href="#ic-plus"/></svg>
<div class="t" style="left:611px;top:665px;height:18px;line-height:18px;">2015-01-07 12:39:27</div>
<div class="t r" style="left:741px;width:140px;top:665px;height:18px;line-height:18px;letter-spacing:-0.08px;">Przyjęcie zewnętrzne</div>
<div class="t r" style="left:816px;width:140px;top:665px;height:18px;line-height:18px;">134-3/2015</div>
<div class="t r" style="left:876px;width:140px;top:665px;height:18px;line-height:18px;">0,170</div>
<div class="t r" style="left:986px;width:140px;top:665px;height:18px;line-height:18px;">-49,900</div>
<div class="t r" style="left:1096px;width:140px;top:665px;height:18px;line-height:18px;">8,140</div>
<div class="t r" style="left:1196px;width:140px;top:665px;height:18px;line-height:18px;">-41,760</div>
<div class="t" style="left:1590px;top:665px;height:18px;line-height:18px;">Waga 1</div>
<div class="fl" style="left:1344px;top:682px;width:232px;height:1px;"></div>
<div class="s1" style="left:1400px;top:669px;width:92px;height:11px;"></div>
<div class="s2" style="left:1484px;top:668px;width:73px;height:11px;"></div>
<div style="left:568px;top:700px;width:1091px;height:1px;background-image:linear-gradient(90deg,#e6e6e6 50%,transparent 50%);background-size:2px 1px;"></div>
<svg class="i" style="left:592px;top:687px" width="9" height="9" viewBox="0 0 9 9"><use href="#ic-plus"/></svg>
<div class="t" style="left:611px;top:683px;height:18px;line-height:18px;">2015-01-05 16:48:39</div>
<div class="t r" style="left:741px;width:140px;top:683px;height:18px;line-height:18px;letter-spacing:-0.08px;">Przyjęcie zewnętrzne</div>
<div class="t r" style="left:816px;width:140px;top:683px;height:18px;line-height:18px;">107/2015</div>
<div class="t r" style="left:876px;width:140px;top:683px;height:18px;line-height:18px;">0,460</div>
<div class="t r" style="left:986px;width:140px;top:683px;height:18px;line-height:18px;">-49,900</div>
<div class="t r" style="left:1096px;width:140px;top:683px;height:18px;line-height:18px;">7,970</div>
<div class="t r" style="left:1196px;width:140px;top:683px;height:18px;line-height:18px;">-41,930</div>
<div class="t" style="left:1590px;top:683px;height:18px;line-height:18px;">Waga 1</div>
<div class="fl" style="left:1344px;top:700px;width:232px;height:1px;"></div>
<div class="s1" style="left:1400px;top:687px;width:92px;height:11px;"></div>
<div class="s2" style="left:1484px;top:686px;width:73px;height:11px;"></div>
<div style="left:568px;top:718px;width:1091px;height:1px;background-image:linear-gradient(90deg,#e6e6e6 50%,transparent 50%);background-size:2px 1px;"></div>
<svg class="i" style="left:592px;top:705px" width="9" height="9" viewBox="0 0 9 9"><use href="#ic-plus"/></svg>
<div class="t" style="left:611px;top:701px;height:18px;line-height:18px;">2015-01-05 12:35:51</div>
<div class="t r" style="left:741px;width:140px;top:701px;height:18px;line-height:18px;letter-spacing:-0.08px;">Przyjęcie zewnętrzne</div>
<div class="t r" style="left:816px;width:140px;top:701px;height:18px;line-height:18px;">86-2/2015</div>
<div class="t r" style="left:876px;width:140px;top:701px;height:18px;line-height:18px;">0,930</div>
<div class="t r" style="left:986px;width:140px;top:701px;height:18px;line-height:18px;">-49,900</div>
<div class="t r" style="left:1096px;width:140px;top:701px;height:18px;line-height:18px;">7,510</div>
<div class="t r" style="left:1196px;width:140px;top:701px;height:18px;line-height:18px;">-42,390</div>
<div class="t" style="left:1590px;top:701px;height:18px;line-height:18px;">Waga 1</div>
<div class="fl" style="left:1344px;top:718px;width:232px;height:1px;"></div>
<div class="s1" style="left:1400px;top:705px;width:92px;height:11px;"></div>
<div class="s2" style="left:1484px;top:704px;width:73px;height:11px;"></div>
<div style="left:568px;top:736px;width:1091px;height:1px;background-image:linear-gradient(90deg,#e6e6e6 50%,transparent 50%);background-size:2px 1px;"></div>
<svg class="i" style="left:592px;top:723px" width="9" height="9" viewBox="0 0 9 9"><use href="#ic-plus"/></svg>
<div class="t" style="left:611px;top:719px;height:18px;line-height:18px;">2015-01-05 11:04:41</div>
<div class="t r" style="left:741px;width:140px;top:719px;height:18px;line-height:18px;letter-spacing:-0.08px;">Przyjęcie zewnętrzne</div>
<div class="t r" style="left:816px;width:140px;top:719px;height:18px;line-height:18px;">78-2/2015</div>
<div class="t r" style="left:876px;width:140px;top:719px;height:18px;line-height:18px;">0,300</div>
<div class="t r" style="left:986px;width:140px;top:719px;height:18px;line-height:18px;">-49,900</div>
<div class="t r" style="left:1096px;width:140px;top:719px;height:18px;line-height:18px;">6,580</div>
<div class="t r" style="left:1196px;width:140px;top:719px;height:18px;line-height:18px;">-43,320</div>
<div class="t" style="left:1590px;top:719px;height:18px;line-height:18px;">Waga 1</div>
<div class="fl" style="left:1344px;top:736px;width:232px;height:1px;"></div>
<div class="s1" style="left:1400px;top:723px;width:92px;height:11px;"></div>
<div class="s2" style="left:1484px;top:722px;width:73px;height:11px;"></div>
<div style="left:567px;top:957px;width:1091px;height:15px;background:#f0f0f0;"></div>
<div style="left:584px;top:957px;width:822px;height:15px;background:#cdcdcd;"></div>
<svg class="i" style="left:572px;top:960px" width="6" height="9" viewBox="0 0 6 9"><path d="M5.2 1.2 L1.7 4.5 L5.2 7.8" stroke="#404040" stroke-width="1.9" fill="none"/></svg>
<svg class="i" style="left:1648px;top:960px" width="6" height="9" viewBox="0 0 6 9"><path d="M0.8 1.2 L4.3 4.5 L0.8 7.8" stroke="#404040" stroke-width="1.9" fill="none"/></svg>
</body></html>
